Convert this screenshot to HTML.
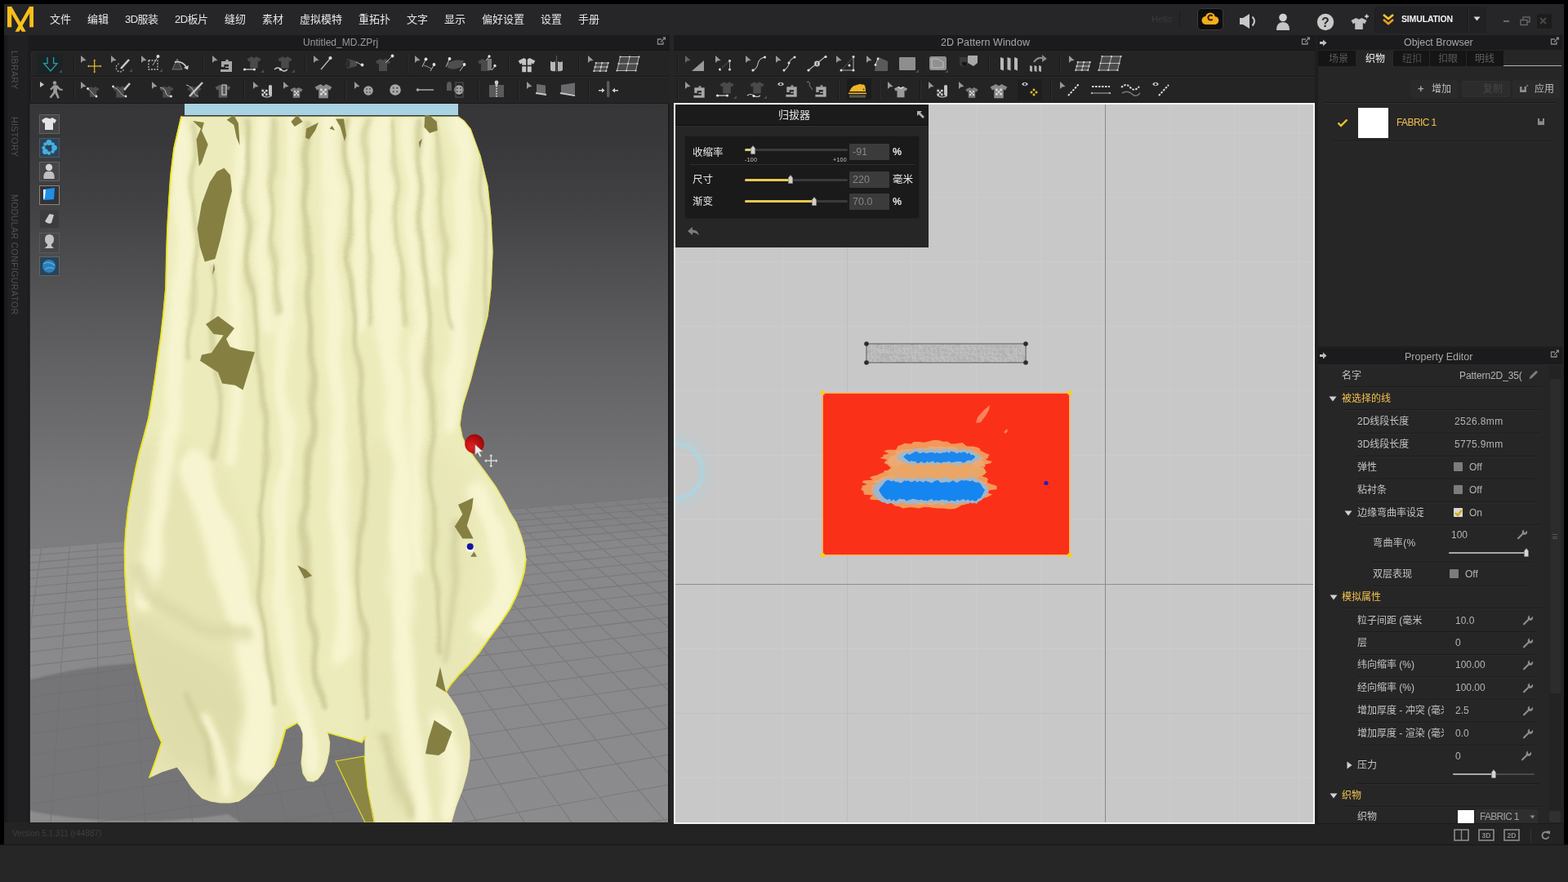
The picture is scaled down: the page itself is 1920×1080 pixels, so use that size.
<!DOCTYPE html>
<html lang="zh"><head><meta charset="utf-8"><title>Marvelous Designer</title><style>
html,body{margin:0;padding:0;}
body{width:1920px;height:1080px;overflow:hidden;background:#262626;position:relative;font-family:"Liberation Sans","Noto Sans CJK SC",sans-serif;}
.b{position:absolute;display:block;}
.t{position:absolute;white-space:nowrap;font-family:"Liberation Sans","Noto Sans CJK SC",sans-serif;will-change:transform;}
</style></head>
<body>
<div class="b" style="left:0px;top:0px;width:1920px;height:1035px;background:#000;"></div>
<div class="b" style="left:5px;top:5px;width:1910px;height:1030px;background:#252526;"></div>
<div class="b" style="left:5px;top:5px;width:1910px;height:38px;background:#262628;"></div>
<div class="b" style="left:5px;top:43px;width:1910px;height:19px;background:#252526;"></div>
<div class="b" style="left:37px;top:43px;width:783px;height:18px;background:#1b1b1d;"></div>
<div class="b" style="left:825px;top:43px;width:785px;height:18px;background:#1b1b1d;"></div>
<div class="b" style="left:1614px;top:43px;width:299px;height:18px;background:#1b1b1d;"></div>
<div class="b" style="left:37px;top:62px;width:783px;height:64px;background:#242425;"></div>
<div class="b" style="left:825px;top:62px;width:785px;height:64px;background:#242425;"></div>
<div class="b" style="left:37px;top:61px;width:783px;height:1px;background:#151516;"></div>
<div class="b" style="left:825px;top:61px;width:785px;height:1px;background:#151516;"></div>
<div class="b" style="left:37px;top:93px;width:783px;height:1px;background:#18181a;"></div>
<div class="b" style="left:825px;top:93px;width:785px;height:1px;background:#18181a;"></div>
<div class="b" style="left:37px;top:94px;width:783px;height:1px;background:#2c2c2e;"></div>
<div class="b" style="left:825px;top:94px;width:785px;height:1px;background:#2c2c2e;"></div>
<div class="b" style="left:5px;top:43px;width:31px;height:991px;background:#202022;"></div>
<div class="b" style="left:5px;top:43px;width:4px;height:991px;background:#1a1a1b;"></div>
<div class="b" style="left:34px;top:43px;width:3px;height:991px;background:#1c1c1d;"></div>
<div class="b" style="left:5px;top:1007px;width:1910px;height:27px;background:#232324;"></div>
<div class="b" style="left:0px;top:1034px;width:1920px;height:1px;background:#171717;"></div>
<div class="b" style="left:0px;top:1035px;width:1920px;height:45px;background:#262626;"></div>
<svg class="b" style="left:0px;top:0px;" width="50" height="44"><g fill="#f9be1c"><rect x="9" y="8" width="5.2" height="25.3"/><rect x="36.2" y="8" width="4.8" height="25.3"/><path d="M9 8h5.200L31.700 38.700h-4.900z"/><path d="M41 8h-5L18.500 38.700h4.800z"/></g></svg>
<div class="t " style="left:61px;top:16.2px;font-size:13px;line-height:15.6px;color:#e6e6e6;">文件</div>
<div class="t " style="left:107px;top:16.2px;font-size:13px;line-height:15.6px;color:#e6e6e6;">编辑</div>
<div class="t " style="left:153px;top:16.2px;font-size:13px;line-height:15.6px;color:#e6e6e6;letter-spacing:-0.5px;">3D服装</div>
<div class="t " style="left:214px;top:16.2px;font-size:13px;line-height:15.6px;color:#e6e6e6;letter-spacing:-0.5px;">2D板片</div>
<div class="t " style="left:275px;top:16.2px;font-size:13px;line-height:15.6px;color:#e6e6e6;">缝纫</div>
<div class="t " style="left:321px;top:16.2px;font-size:13px;line-height:15.6px;color:#e6e6e6;">素材</div>
<div class="t " style="left:367px;top:16.2px;font-size:13px;line-height:15.6px;color:#e6e6e6;">虚拟模特</div>
<div class="t " style="left:439px;top:16.2px;font-size:13px;line-height:15.6px;color:#e6e6e6;">重拓扑</div>
<div class="t " style="left:498px;top:16.2px;font-size:13px;line-height:15.6px;color:#e6e6e6;">文字</div>
<div class="t " style="left:544px;top:16.2px;font-size:13px;line-height:15.6px;color:#e6e6e6;">显示</div>
<div class="t " style="left:590px;top:16.2px;font-size:13px;line-height:15.6px;color:#e6e6e6;">偏好设置</div>
<div class="t " style="left:662px;top:16.2px;font-size:13px;line-height:15.6px;color:#e6e6e6;">设置</div>
<div class="t " style="left:708px;top:16.2px;font-size:13px;line-height:15.6px;color:#e6e6e6;">手册</div>
<div class="t " style="left:371px;top:44.8px;font-size:12px;line-height:14.4px;color:#9a9a9a;letter-spacing:0.05px;">Untitled_MD.ZPrj</div>
<div class="t " style="left:1152px;top:44.5px;font-size:12.5px;line-height:15px;color:#a8a8a8;letter-spacing:0.08px;">2D Pattern Window</div>
<div class="t " style="left:1719px;top:44.56px;font-size:12.4px;line-height:14.88px;color:#a8a8a8;">Object Browser</div>
<svg class="b" style="left:804px;top:44.5px;" width="12" height="10"><path d="M6 3H1.500V9H8V6" fill="none" stroke="#8a8a8a" stroke-width="1.3"/><path d="M5 6.5L10.5 1" stroke="#8a8a8a" stroke-width="1.3"/><path d="M7 0.5H11V4.5z" fill="#8a8a8a"/></svg>
<svg class="b" style="left:1593px;top:44.5px;" width="12" height="10"><path d="M6 3H1.500V9H8V6" fill="none" stroke="#8a8a8a" stroke-width="1.3"/><path d="M5 6.5L10.5 1" stroke="#8a8a8a" stroke-width="1.3"/><path d="M7 0.5H11V4.5z" fill="#8a8a8a"/></svg>
<svg class="b" style="left:1898px;top:44.5px;" width="12" height="10"><path d="M6 3H1.500V9H8V6" fill="none" stroke="#8a8a8a" stroke-width="1.3"/><path d="M5 6.5L10.5 1" stroke="#8a8a8a" stroke-width="1.3"/><path d="M7 0.5H11V4.5z" fill="#8a8a8a"/></svg>
<div class="t" style="left:24px;top:62px;font-size:10.5px;line-height:12px;color:#505052;transform-origin:0 0;transform:rotate(90deg);letter-spacing:0.4px;">LIBRARY</div>
<div class="t" style="left:24px;top:143px;font-size:10.5px;line-height:12px;color:#505052;transform-origin:0 0;transform:rotate(90deg);letter-spacing:0.4px;">HISTORY</div>
<div class="t" style="left:24px;top:238px;font-size:10.5px;line-height:12px;color:#505052;transform-origin:0 0;transform:rotate(90deg);letter-spacing:0.4px;">MODULAR CONFIGURATOR</div>
<div class="t " style="left:15px;top:1014.5px;font-size:10px;line-height:12px;color:#3e3e3e;">Version 5.1.311 (r44887)</div>
<svg class="b" style="left:0px;top:0px;" width="1920" height="130"><rect x="45" y="66" width="32" height="25" rx="1" fill="#1c2325" /><path d="M58 70v7.600h-4.300l8.200 9.400l8.100-9.400h-4.400v-7.600" fill="none" stroke="#2a9ea8" stroke-width="1.3" /><path d="M76 89v-4l-4 4z" fill="#4c4c4c"/><path d="M90.5 66V90" stroke="#1a1a1b" stroke-width="1"/><path d="M91.5 66V90" stroke="#2f2f31" stroke-width="1"/><path d="M99 68l0 9l2.6 -2.6l4 -0.4z" fill="#9a9a9a"/><path d="M109 81L122.5 81" stroke="#f0cc30" stroke-width="1.1" fill="none"/><path d="M115.7 74.5L115.7 87.5" stroke="#f0cc30" stroke-width="1.1" fill="none"/><path d="M109 79.500v3l-2-1.500zM122.500 79.500v3l2-1.500zM114.200 74.500h3l-1.500-2zM114.200 87.500h3l-1.500 2z" fill="#f0cc30" /><path d="M136 68l0 9l2.6 -2.6l4 -0.4z" fill="#9a9a9a"/><path d="M146 78a5 5 0 1 0 6 6" fill="none" stroke="#b0b0b0" stroke-width="1.2" stroke-dasharray="2 1.5"/><path d="M148 84L158 73" stroke="#c8c8c8" stroke-width="2.6" fill="none"/><path d="M162 88v-4l-4 4z" fill="#4c4c4c"/><path d="M173 68l0 9l2.6 -2.6l4 -0.4z" fill="#9a9a9a"/><rect x="182" y="74" width="11" height="11" fill="none" stroke="#b8b8b8" stroke-width="1.3" stroke-dasharray="2 1.5"/><path d="M187 80L193 70" stroke="#b0b0b0" stroke-width="1" fill="none"/><circle cx="193.5" cy="69" r="2" fill="#d8d8d8"/><path d="M199 88v-4l-4 4z" fill="#4c4c4c"/><path d="M217 72l-6 13h12z" fill="#3e3e40" stroke="#777" stroke-width="1" /><path d="M214 76q9-2 14 6" fill="none" stroke="#c8c8c8" stroke-width="1.8" /><path d="M231 80l-1 5.5l-5-2.5z" fill="#d0d0d0" /><path d="M248.5 66V90" stroke="#1a1a1b" stroke-width="1"/><path d="M249.5 66V90" stroke="#2f2f31" stroke-width="1"/><path d="M260 68l0 9l2.6 -2.6l4 -0.4z" fill="#9a9a9a"/><rect x="271" y="75" width="13" height="4" fill="#a8a8a8"/><rect x="271" y="79" width="3.5" height="3" fill="#a8a8a8"/><rect x="280" y="79" width="4" height="6.5" fill="#a8a8a8"/><rect x="270" y="85" width="14" height="3" fill="#a8a8a8"/><rect x="276.5" y="73" width="3" height="2" fill="#a8a8a8"/><rect x="276" y="81.5" width="4" height="1.5" fill="#a8a8a8"/><path d="M308.15 69.35L302.45 72.2L304.35 75.525L306.25 74.575L306.25 83.6L315.75 83.6L315.75 74.575L317.65 75.525L319.55 72.2L313.85 69.35L311 71.25z" fill="#4a4a4c"/><path d="M300 85L312 85" stroke="#ddd" stroke-width="1.2" fill="none"/><circle cx="299.5" cy="85" r="1.6" fill="#e0e0e0"/><circle cx="311.5" cy="85" r="1.6" fill="#e0e0e0"/><path d="M323 89v-4l-4 4z" fill="#4c4c4c"/><path d="M346.15 69.35L340.45 72.2L342.35 75.525L344.25 74.575L344.25 83.6L353.75 83.6L353.75 74.575L355.65 75.525L357.55 72.2L351.85 69.35L349 71.25z" fill="#4a4a4c"/><path d="M336 85q4-4 8 0t8 0" fill="none" stroke="#ccc" stroke-width="1.2" /><circle cx="343.5" cy="85" r="1.6" fill="#e0e0e0"/><path d="M361 89v-4l-4 4z" fill="#4c4c4c"/><path d="M373.5 66V90" stroke="#1a1a1b" stroke-width="1"/><path d="M374.5 66V90" stroke="#2f2f31" stroke-width="1"/><path d="M384 68l0 9l2.6 -2.6l4 -0.4z" fill="#9a9a9a"/><path d="M393 85L404 72" stroke="#c0c0c0" stroke-width="1.2" fill="none"/><circle cx="404.5" cy="71" r="2.1" fill="#d8d8d8"/><path d="M425 72q-3 6 0 12l12-3v-6z" fill="#4a4a4c" /><ellipse cx="426" cy="78" rx="2.6" ry="5" fill="#2c2c2e"/><path d="M436 76L443 79.5" stroke="#bbb" stroke-width="1" fill="none"/><circle cx="443.5" cy="79.5" r="1.9" fill="#d8d8d8"/><path d="M466 72L460 75L462 78.5L464 77.5L464 87L474 87L474 77.5L476 78.5L478 75L472 72L469 74z" fill="#4a4a4c"/><path d="M472 77L480 69" stroke="#bbb" stroke-width="1" fill="none"/><circle cx="480.5" cy="68.5" r="1.9" fill="#e0e0e0"/><path d="M498.5 66V90" stroke="#1a1a1b" stroke-width="1"/><path d="M499.5 66V90" stroke="#2f2f31" stroke-width="1"/><path d="M508 68l0 9l2.6 -2.6l4 -0.4z" fill="#9a9a9a"/><path d="M519 80q6 2 9 4" fill="none" stroke="#999" stroke-width="1" /><path d="M517 82L521 73" stroke="#bbb" stroke-width="1" fill="none"/><path d="M527 87L531 80" stroke="#bbb" stroke-width="1" fill="none"/><circle cx="521.5" cy="72.5" r="1.9" fill="#e0e0e0"/><circle cx="531.5" cy="79" r="1.9" fill="#e0e0e0"/><path d="M548 78q6-6 20-4l-3 8q-10 5-17 1z" fill="#4e4e50" /><path d="M546 82L550 73" stroke="#bbb" stroke-width="1" fill="none"/><circle cx="550.5" cy="72" r="1.9" fill="#e0e0e0"/><path d="M563 87L568 80" stroke="#bbb" stroke-width="1" fill="none"/><circle cx="568.5" cy="79" r="1.9" fill="#e0e0e0"/><path d="M591 72L585 75L587 78.5L589 77.5L589 87L599 87L599 77.5L601 78.5L603 75L597 72L594 74z" fill="#4a4a4c"/><path d="M597 72h5v14h-5z" fill="#777" /><path d="M595 74L599 69.5" stroke="#ccc" stroke-width="1" fill="none"/><circle cx="599" cy="69" r="1.7" fill="#e0e0e0"/><path d="M602 86L606 81" stroke="#ccc" stroke-width="1" fill="none"/><circle cx="606" cy="80.5" r="1.7" fill="#e0e0e0"/><path d="M622.5 66V90" stroke="#1a1a1b" stroke-width="1"/><path d="M623.5 66V90" stroke="#2f2f31" stroke-width="1"/><path d="M641.55 70.95L634.65 74.4L636.95 78.425L639.25 77.275L639.25 88.2L650.75 88.2L650.75 77.275L653.05 78.425L655.35 74.4L648.45 70.95L645 73.25z" fill="#c4c4c4"/><path d="M645 69L645 89" stroke="#242425" stroke-width="1.6" fill="none"/><path d="M637 80.5L653 80.5" stroke="#242425" stroke-width="1.6" fill="none"/><path d="M674 75q4 2 6 0v12q-3 1-6-1z" fill="#b8b8b8" /><path d="M683 75q3 2 6 0v11q-3 2-6 1z" fill="#b0b0b0" /><path d="M681.5 68L681.5 88" stroke="#555" stroke-width="1.2" fill="none"/><path d="M708.5 66V90" stroke="#1a1a1b" stroke-width="1"/><path d="M709.5 66V90" stroke="#2f2f31" stroke-width="1"/><path d="M720 68l0 9l2.6 -2.6l4 -0.4z" fill="#9a9a9a"/><path d="M729.75 77L744.75 77L742.25 87L727.25 87z" fill="#4a4a4c"/><path d="M729.75 77L727.25 87" stroke="#b4b4b4" stroke-width="1" fill="none"/><path d="M729.75 77L744.75 77" stroke="#b4b4b4" stroke-width="1" fill="none"/><path d="M737.25 77L734.75 87" stroke="#b4b4b4" stroke-width="1" fill="none"/><path d="M728.5 82L743.5 82" stroke="#b4b4b4" stroke-width="1" fill="none"/><path d="M744.75 77L742.25 87" stroke="#b4b4b4" stroke-width="1" fill="none"/><path d="M727.25 87L742.25 87" stroke="#b4b4b4" stroke-width="1" fill="none"/><circle cx="729.75" cy="77" r="1.1" fill="#d8d8d8"/><circle cx="728.5" cy="82" r="1.1" fill="#d8d8d8"/><circle cx="727.25" cy="87" r="1.1" fill="#d8d8d8"/><circle cx="737.25" cy="77" r="1.1" fill="#d8d8d8"/><circle cx="736" cy="82" r="1.1" fill="#d8d8d8"/><circle cx="734.75" cy="87" r="1.1" fill="#d8d8d8"/><circle cx="744.75" cy="77" r="1.1" fill="#d8d8d8"/><circle cx="743.5" cy="82" r="1.1" fill="#d8d8d8"/><circle cx="742.25" cy="87" r="1.1" fill="#d8d8d8"/><path d="M759.5 69.5L782.5 69.5L778.5 86.5L755.5 86.5z" fill="#4a4a4c"/><path d="M759.5 69.5L755.5 86.5" stroke="#b4b4b4" stroke-width="1" fill="none"/><path d="M759.5 69.5L782.5 69.5" stroke="#b4b4b4" stroke-width="1" fill="none"/><path d="M771 69.5L767 86.5" stroke="#b4b4b4" stroke-width="1" fill="none"/><path d="M757.5 78L780.5 78" stroke="#b4b4b4" stroke-width="1" fill="none"/><path d="M782.5 69.5L778.5 86.5" stroke="#b4b4b4" stroke-width="1" fill="none"/><path d="M755.5 86.5L778.5 86.5" stroke="#b4b4b4" stroke-width="1" fill="none"/><circle cx="759.5" cy="69.5" r="1.1" fill="#d8d8d8"/><circle cx="757.5" cy="78" r="1.1" fill="#d8d8d8"/><circle cx="755.5" cy="86.5" r="1.1" fill="#d8d8d8"/><circle cx="771" cy="69.5" r="1.1" fill="#d8d8d8"/><circle cx="769" cy="78" r="1.1" fill="#d8d8d8"/><circle cx="767" cy="86.5" r="1.1" fill="#d8d8d8"/><circle cx="782.5" cy="69.5" r="1.1" fill="#d8d8d8"/><circle cx="780.5" cy="78" r="1.1" fill="#d8d8d8"/><circle cx="778.5" cy="86.5" r="1.1" fill="#d8d8d8"/><path d="M49 100l5 3.5l-5 3.5z" fill="#c8c8c8" /><circle cx="67" cy="101.5" r="2.3" fill="#9a9a9a"/><path d="M66 104l-5 5l1.5 1.5l3-2.5l-0.5 5l-4.5 6l2 1.2l5-6l3 6.5l2.2-1l-3-8l0.5-3.5l3 2.5h3.5v-2h-2.5l-4-4.5z" fill="#9a9a9a" /><path d="M90.5 98V122" stroke="#1a1a1b" stroke-width="1"/><path d="M91.5 98V122" stroke="#2f2f31" stroke-width="1"/><path d="M99 100l0 9l2.6 -2.6l4 -0.4z" fill="#9a9a9a"/><path d="M111.45 106.05L106.35 108.6L108.05 111.575L109.75 110.725L109.75 118.8L118.25 118.8L118.25 110.725L119.95 111.575L121.65 108.6L116.55 106.05L114 107.75z" fill="#4a4a4c"/><path d="M107 108q4 3 6 6t5 4" fill="none" stroke="#aaa" stroke-width="1" /><circle cx="107.5" cy="108.5" r="1.4" fill="#e0e0e0"/><circle cx="118" cy="118" r="1.4" fill="#e0e0e0"/><path d="M144.15 105.35L138.45 108.2L140.35 111.525L142.25 110.575L142.25 119.6L151.75 119.6L151.75 110.575L153.65 111.525L155.55 108.2L149.85 105.35L147 107.25z" fill="#4a4a4c"/><path d="M138 106q6 2 9 7t7 5" fill="none" stroke="#aaa" stroke-width="1" /><circle cx="138.5" cy="106" r="1.4" fill="#e0e0e0"/><circle cx="154" cy="118" r="1.4" fill="#e0e0e0"/><path d="M152 110L159 102" stroke="#c8c8c8" stroke-width="2.6" fill="none"/><path d="M186 100l0 9l2.6 -2.6l4 -0.4z" fill="#9a9a9a"/><path d="M201.15 105.35L195.45 108.2L197.35 111.525L199.25 110.575L199.25 119.6L208.75 119.6L208.75 110.575L210.65 111.525L212.55 108.2L206.85 105.35L204 107.25z" fill="#4a4a4c"/><path d="M196 107q6 1 7 6t6 5" fill="none" stroke="#bbb" stroke-width="1" /><circle cx="209.5" cy="118" r="1.4" fill="#e0e0e0"/><path d="M235.15 105.35L229.45 108.2L231.35 111.525L233.25 110.575L233.25 119.6L242.75 119.6L242.75 110.575L244.65 111.525L246.55 108.2L240.85 105.35L238 107.25z" fill="#4a4a4c"/><path d="M228 104q7 2 9 8t6 6" fill="none" stroke="#bbb" stroke-width="1" /><path d="M232 118L248 101" stroke="#c8c8c8" stroke-width="2.4" fill="none"/><path d="M269.85 103.65L263.55 106.8L265.65 110.475L267.75 109.425L267.75 119.4L278.25 119.4L278.25 109.425L280.35 110.475L282.45 106.8L276.15 103.65L273 105.75z" fill="#5a5a5c"/><rect x="272" y="104" width="5" height="12" fill="none" stroke="#c8c8c8" stroke-width="1.2"/><path d="M298.5 98V122" stroke="#1a1a1b" stroke-width="1"/><path d="M299.5 98V122" stroke="#2f2f31" stroke-width="1"/><path d="M310 100l0 9l2.6 -2.6l4 -0.4z" fill="#9a9a9a"/><path d="M320 108l8 2v9l-8-2z" fill="#3a3a3c" /><rect x="320.49" y="109.84" width="2.34" height="2.34" fill="#dcdcdc"/><rect x="320.49" y="114.52" width="2.34" height="2.34" fill="#dcdcdc"/><rect x="322.83" y="112.18" width="2.34" height="2.34" fill="#dcdcdc"/><rect x="325.17" y="109.84" width="2.34" height="2.34" fill="#dcdcdc"/><rect x="325.17" y="114.52" width="2.34" height="2.34" fill="#dcdcdc"/><path d="M329 105q2-2 4 0v11q-2 3-4 0z" fill="#c4c4c4" /><path d="M321 117q6 4 12 0" fill="none" stroke="#ccc" stroke-width="1.2" /><path d="M347 100l0 9l2.6 -2.6l4 -0.4z" fill="#9a9a9a"/><path d="M360.45 107.05L355.35 109.6L357.05 112.575L358.75 111.725L358.75 119.8L367.25 119.8L367.25 111.725L368.95 112.575L370.65 109.6L365.55 107.05L363 108.75z" fill="#7a7a7a"/><rect x="360.075" y="111.2" width="1.95" height="1.95" fill="#dcdcdc"/><rect x="360.075" y="115.1" width="1.95" height="1.95" fill="#dcdcdc"/><rect x="362.025" y="113.15" width="1.95" height="1.95" fill="#dcdcdc"/><rect x="363.975" y="111.2" width="1.95" height="1.95" fill="#dcdcdc"/><rect x="363.975" y="115.1" width="1.95" height="1.95" fill="#dcdcdc"/><path d="M392.55 102.95L385.65 106.4L387.95 110.425L390.25 109.275L390.25 120.2L401.75 120.2L401.75 109.275L404.05 110.425L406.35 106.4L399.45 102.95L396 105.25z" fill="#8a8a8a"/><rect x="392.1" y="108.6" width="2.6" height="2.6" fill="#dcdcdc"/><rect x="392.1" y="113.8" width="2.6" height="2.6" fill="#dcdcdc"/><rect x="394.7" y="111.2" width="2.6" height="2.6" fill="#dcdcdc"/><rect x="397.3" y="108.6" width="2.6" height="2.6" fill="#dcdcdc"/><rect x="397.3" y="113.8" width="2.6" height="2.6" fill="#dcdcdc"/><path d="M422.5 98V122" stroke="#1a1a1b" stroke-width="1"/><path d="M423.5 98V122" stroke="#2f2f31" stroke-width="1"/><path d="M434 100l0 9l2.6 -2.6l4 -0.4z" fill="#9a9a9a"/><circle cx="451" cy="111" r="5.8" fill="#a4a4a4"/><circle cx="449.086" cy="109.086" r="0.986" fill="#555"/><circle cx="452.914" cy="109.086" r="0.986" fill="#555"/><circle cx="449.086" cy="112.914" r="0.986" fill="#555"/><circle cx="452.914" cy="112.914" r="0.986" fill="#555"/><circle cx="484" cy="110" r="6.8" fill="#a8a8a8"/><circle cx="481.756" cy="107.756" r="1.156" fill="#555"/><circle cx="486.244" cy="107.756" r="1.156" fill="#555"/><circle cx="481.756" cy="112.244" r="1.156" fill="#555"/><circle cx="486.244" cy="112.244" r="1.156" fill="#555"/><path d="M511 110L531 110" stroke="#a0a0a0" stroke-width="1.6" fill="none"/><circle cx="511.5" cy="110" r="1.8" fill="#a8a8a8"/><path d="M547 105q0-5 3-5t3 5v6h-6z" fill="#5a5a5c" /><circle cx="562" cy="110" r="5.8" fill="#a4a4a4"/><circle cx="560.086" cy="108.086" r="0.986" fill="#555"/><circle cx="563.914" cy="108.086" r="0.986" fill="#555"/><circle cx="560.086" cy="111.914" r="0.986" fill="#555"/><circle cx="563.914" cy="111.914" r="0.986" fill="#555"/><rect x="558" y="101" width="9" height="18" fill="none" stroke="#555" stroke-width="1"/><path d="M585.5 98V122" stroke="#1a1a1b" stroke-width="1"/><path d="M586.5 98V122" stroke="#2f2f31" stroke-width="1"/><rect x="599" y="104" width="18" height="15" rx="0" fill="#5a5a5c" /><path d="M606.5 100h3v5h-3z" fill="#c0c0c0" /><circle cx="608" cy="101" r="2.4" fill="#c8c8c8"/><path d="M608 105L608 119" stroke="#ddd" stroke-width="1.6" fill="none" stroke-dasharray="1.5 1.5"/><path d="M634.5 98V122" stroke="#1a1a1b" stroke-width="1"/><path d="M635.5 98V122" stroke="#2f2f31" stroke-width="1"/><path d="M645 100l0 9l2.6 -2.6l4 -0.4z" fill="#9a9a9a"/><path d="M657 103l11 1.5v11l-11-1z" fill="#6a6a6c" /><path d="M656 114L669 116" stroke="#c8c8c8" stroke-width="1.8" fill="none"/><path d="M687 104l17-2.5v14l-17-2z" fill="#6a6a6c" /><path d="M686 114L704 117" stroke="#c8c8c8" stroke-width="1.8" fill="none"/><path d="M720.5 98V122" stroke="#1a1a1b" stroke-width="1"/><path d="M721.5 98V122" stroke="#2f2f31" stroke-width="1"/><rect x="743" y="99" width="3.4" height="20" rx="1.5" fill="#5a5a5c" /><path d="M733 110h4v-2.2l3.6 2.9l-3.6 2.9v-2.2h-4z" fill="#d0d0d0" /><path d="M757 110h-4v-2.2l-3.6 2.9l3.6 2.9v-2.2h4z" fill="#d0d0d0" /><path d="M829.5 66V90" stroke="#1a1a1b" stroke-width="1"/><path d="M830.5 66V90" stroke="#2f2f31" stroke-width="1"/><path d="M829.5 98V122" stroke="#1a1a1b" stroke-width="1"/><path d="M830.5 98V122" stroke="#2f2f31" stroke-width="1"/><path d="M37.5 66V90" stroke="#1a1a1b" stroke-width="1"/><path d="M38.5 66V90" stroke="#2f2f31" stroke-width="1"/><path d="M37.5 98V122" stroke="#1a1a1b" stroke-width="1"/><path d="M38.5 98V122" stroke="#2f2f31" stroke-width="1"/><path d="M839 68l0 9l2.6 -2.6l4 -0.4z" fill="#666"/><path d="M847 87h15v-13z" fill="#9a9a9a" /><path d="M876 68l0 9l2.6 -2.6l4 -0.4z" fill="#9a9a9a"/><circle cx="881.5" cy="85" r="1.5" fill="#e0e0e0"/><circle cx="893.5" cy="85" r="1.5" fill="#e0e0e0"/><circle cx="893.5" cy="74.5" r="1.5" fill="#e0e0e0"/><path d="M882 85L893 75" stroke="#888" stroke-width="1" fill="none" stroke-dasharray="1.5 1.5"/><path d="M893.5 75L893.5 85" stroke="#aaa" stroke-width="1" fill="none"/><path d="M913 68l0 9l2.6 -2.6l4 -0.4z" fill="#9a9a9a"/><path d="M922 86q5-2 6-8t8-8" fill="none" stroke="#b0b0b0" stroke-width="1.2" /><circle cx="922" cy="86" r="1.6" fill="#e0e0e0"/><circle cx="936.5" cy="70" r="1.6" fill="#e0e0e0"/><path d="M950 68l0 9l2.6 -2.6l4 -0.4z" fill="#9a9a9a"/><path d="M960 86q5-3 6-8t7-8" fill="none" stroke="#b0b0b0" stroke-width="1.2" /><circle cx="960" cy="86" r="1.5" fill="#e0e0e0"/><circle cx="966" cy="77" r="1.5" fill="#e0e0e0"/><circle cx="973" cy="70" r="1.5" fill="#e0e0e0"/><path d="M990 86L1011 69" stroke="#b0b0b0" stroke-width="1.2" fill="none"/><circle cx="990" cy="86" r="1.6" fill="#e0e0e0"/><circle cx="1011" cy="69.5" r="1.6" fill="#e0e0e0"/><circle cx="1000.5" cy="78" r="3.4" fill="#c4c4c4"/><path d="M1000.5 76L1000.5 80" stroke="#333" stroke-width="1" fill="none"/><path d="M1024 68l0 9l2.6 -2.6l4 -0.4z" fill="#9a9a9a"/><path d="M1030 86h15v-16" fill="none" stroke="#aaa" stroke-width="1" /><path d="M1030 86L1045 70" stroke="#888" stroke-width="1" fill="none" stroke-dasharray="1.5 1.5"/><circle cx="1030" cy="86" r="1.5" fill="#e0e0e0"/><circle cx="1045" cy="86" r="1.5" fill="#e0e0e0"/><circle cx="1045" cy="69.5" r="1.5" fill="#e0e0e0"/><circle cx="1040" cy="80" r="1.5" fill="#e0e0e0"/><path d="M1061 68l0 9l2.6 -2.6l4 -0.4z" fill="#9a9a9a"/><path d="M1072 80l4-10l11 5v12h-16z" fill="#5a5a5c" /><path d="M1072 79L1075 72" stroke="#ccc" stroke-width="1" fill="none"/><circle cx="1075" cy="72" r="1.4" fill="#e0e0e0"/><circle cx="1072" cy="79.5" r="1.4" fill="#e0e0e0"/><rect x="1101" y="70" width="20" height="16" rx="1" fill="#8e8e8e" /><path d="M1125 89v-4l-4 4z" fill="#4c4c4c"/><rect x="1138" y="69" width="21" height="17" rx="2.5" fill="#909090" /><path d="M1141 72h7l7 4v7h-14z" fill="none" stroke="#c0c0c0" stroke-width="1" /><path d="M1161 89v-4l-4 4z" fill="#4c4c4c"/><path d="M1175 70h10v9q-5 6-10 0z" fill="#3a3a3c" /><path d="M1178 76h6l0 3q-3 4-6 0z" fill="#161616" /><path d="M1185 68h12v9l-5 4l-7-4z" fill="#a8a8a8" /><path d="M1210.5 66V90" stroke="#1a1a1b" stroke-width="1"/><path d="M1211.5 66V90" stroke="#2f2f31" stroke-width="1"/><path d="M1225 70l4 1.5v15l-4-1.5z" fill="#b8b8b8" /><path d="M1233.5 70l4 1.5v15l-4-1.5z" fill="#b8b8b8" /><path d="M1242 70l4 1.5v15l-4-1.5z" fill="#b8b8b8" /><path d="M1261 80l3 1v7l-3-1z" fill="#b0b0b0" /><path d="M1266.5 80l3 1v7l-3-1z" fill="#b0b0b0" /><path d="M1272 80l3 1v7l-3-1z" fill="#b0b0b0" /><path d="M1266 76q4-6 10-5" fill="none" stroke="#8a8a8a" stroke-width="2.2" /><path d="M1276 67l6 5l-6 4z" fill="#8a8a8a" /><path d="M1297.5 66V90" stroke="#1a1a1b" stroke-width="1"/><path d="M1298.5 66V90" stroke="#2f2f31" stroke-width="1"/><path d="M1309 68l0 9l2.6 -2.6l4 -0.4z" fill="#9a9a9a"/><path d="M1319.75 76L1334.75 76L1332.25 86L1317.25 86z" fill="#4a4a4c"/><path d="M1319.75 76L1317.25 86" stroke="#b4b4b4" stroke-width="1" fill="none"/><path d="M1319.75 76L1334.75 76" stroke="#b4b4b4" stroke-width="1" fill="none"/><path d="M1327.25 76L1324.75 86" stroke="#b4b4b4" stroke-width="1" fill="none"/><path d="M1318.5 81L1333.5 81" stroke="#b4b4b4" stroke-width="1" fill="none"/><path d="M1334.75 76L1332.25 86" stroke="#b4b4b4" stroke-width="1" fill="none"/><path d="M1317.25 86L1332.25 86" stroke="#b4b4b4" stroke-width="1" fill="none"/><circle cx="1319.75" cy="76" r="1.1" fill="#d8d8d8"/><circle cx="1318.5" cy="81" r="1.1" fill="#d8d8d8"/><circle cx="1317.25" cy="86" r="1.1" fill="#d8d8d8"/><circle cx="1327.25" cy="76" r="1.1" fill="#d8d8d8"/><circle cx="1326" cy="81" r="1.1" fill="#d8d8d8"/><circle cx="1324.75" cy="86" r="1.1" fill="#d8d8d8"/><circle cx="1334.75" cy="76" r="1.1" fill="#d8d8d8"/><circle cx="1333.5" cy="81" r="1.1" fill="#d8d8d8"/><circle cx="1332.25" cy="86" r="1.1" fill="#d8d8d8"/><path d="M1349.5 69L1372.5 69L1368.5 86L1345.5 86z" fill="#4a4a4c"/><path d="M1349.5 69L1345.5 86" stroke="#b4b4b4" stroke-width="1" fill="none"/><path d="M1349.5 69L1372.5 69" stroke="#b4b4b4" stroke-width="1" fill="none"/><path d="M1361 69L1357 86" stroke="#b4b4b4" stroke-width="1" fill="none"/><path d="M1347.5 77.5L1370.5 77.5" stroke="#b4b4b4" stroke-width="1" fill="none"/><path d="M1372.5 69L1368.5 86" stroke="#b4b4b4" stroke-width="1" fill="none"/><path d="M1345.5 86L1368.5 86" stroke="#b4b4b4" stroke-width="1" fill="none"/><circle cx="1349.5" cy="69" r="1.1" fill="#d8d8d8"/><circle cx="1347.5" cy="77.5" r="1.1" fill="#d8d8d8"/><circle cx="1345.5" cy="86" r="1.1" fill="#d8d8d8"/><circle cx="1361" cy="69" r="1.1" fill="#d8d8d8"/><circle cx="1359" cy="77.5" r="1.1" fill="#d8d8d8"/><circle cx="1357" cy="86" r="1.1" fill="#d8d8d8"/><circle cx="1372.5" cy="69" r="1.1" fill="#d8d8d8"/><circle cx="1370.5" cy="77.5" r="1.1" fill="#d8d8d8"/><circle cx="1368.5" cy="86" r="1.1" fill="#d8d8d8"/><path d="M839 100l0 9l2.6 -2.6l4 -0.4z" fill="#9a9a9a"/><rect x="850.3" y="107.3" width="12.35" height="3.8" fill="#a8a8a8"/><rect x="850.3" y="111.1" width="3.325" height="2.85" fill="#a8a8a8"/><rect x="858.85" y="111.1" width="3.8" height="6.175" fill="#a8a8a8"/><rect x="849.35" y="116.8" width="13.3" height="2.85" fill="#a8a8a8"/><rect x="855.525" y="105.4" width="2.85" height="1.9" fill="#a8a8a8"/><rect x="855.05" y="113.475" width="3.8" height="1.425" fill="#a8a8a8"/><path d="M887.15 100.35L881.45 103.2L883.35 106.525L885.25 105.575L885.25 114.6L894.75 114.6L894.75 105.575L896.65 106.525L898.55 103.2L892.85 100.35L890 102.25z" fill="#4a4a4c"/><path d="M879 117L891 117" stroke="#ddd" stroke-width="1.2" fill="none"/><circle cx="878.5" cy="117" r="1.6" fill="#e0e0e0"/><circle cx="890.5" cy="117" r="1.6" fill="#e0e0e0"/><path d="M902 121v-4l-4 4z" fill="#4c4c4c"/><path d="M924.15 100.35L918.45 103.2L920.35 106.525L922.25 105.575L922.25 114.6L931.75 114.6L931.75 105.575L933.65 106.525L935.55 103.2L929.85 100.35L927 102.25z" fill="#4a4a4c"/><path d="M915 117q4-3 8 0t8 0" fill="none" stroke="#ccc" stroke-width="1.2" /><circle cx="923" cy="117.5" r="1.6" fill="#e0e0e0"/><path d="M939 121v-4l-4 4z" fill="#4c4c4c"/><path d="M952 103q4-4.5 8 0q-4 4.5-8 0z" fill="#d0d0d0"/><circle cx="956" cy="103" r="1.5" fill="#222"/><rect x="963.3" y="106.3" width="12.35" height="3.8" fill="#a8a8a8"/><rect x="963.3" y="110.1" width="3.325" height="2.85" fill="#a8a8a8"/><rect x="971.85" y="110.1" width="3.8" height="6.175" fill="#a8a8a8"/><rect x="962.35" y="115.8" width="13.3" height="2.85" fill="#a8a8a8"/><rect x="968.525" y="104.4" width="2.85" height="1.9" fill="#a8a8a8"/><rect x="968.05" y="112.475" width="3.8" height="1.425" fill="#a8a8a8"/><path d="M988 101a2 2 0 1 1 3 3l4 6" fill="none" stroke="#666" stroke-width="1.2" /><rect x="999.3" y="106.3" width="12.35" height="3.8" fill="#a8a8a8"/><rect x="999.3" y="110.1" width="3.325" height="2.85" fill="#a8a8a8"/><rect x="1007.85" y="110.1" width="3.8" height="6.175" fill="#a8a8a8"/><rect x="998.35" y="115.8" width="13.3" height="2.85" fill="#a8a8a8"/><rect x="1004.52" y="104.4" width="2.85" height="1.9" fill="#a8a8a8"/><rect x="1004.05" y="112.475" width="3.8" height="1.425" fill="#a8a8a8"/><path d="M1026.5 98V122" stroke="#1a1a1b" stroke-width="1"/><path d="M1027.5 98V122" stroke="#2f2f31" stroke-width="1"/><rect x="1037" y="96" width="30" height="26" rx="0" fill="#1c1c1e" /><path d="M1040 112q3-8 12-9h5q3 1 3 9z" fill="#f0b428" /><path d="M1047 104q6-3 10-0.5" fill="none" stroke="#242425" stroke-width="1.4" /><rect x="1039" y="113.5" width="22" height="1.6" rx="0" fill="#f0b428" /><circle cx="1057.5" cy="109.5" r="0.9" fill="#5a3a00"/><rect x="1040" y="116.5" width="20" height="3" rx="0" fill="#5a5a4c" /><path d="M1076.5 98V122" stroke="#1a1a1b" stroke-width="1"/><path d="M1077.5 98V122" stroke="#2f2f31" stroke-width="1"/><path d="M1087 100l0 9l2.6 -2.6l4 -0.4z" fill="#9a9a9a"/><path d="M1100.3 105.7L1094.9 108.4L1096.7 111.55L1098.5 110.65L1098.5 119.2L1107.5 119.2L1107.5 110.65L1109.3 111.55L1111.1 108.4L1105.7 105.7L1103 107.5z" fill="#9a9a9a"/><path d="M1100 106.5q3 3 6 0" fill="none" stroke="#e0e0e0" stroke-width="1.4" /><path d="M1126.5 98V122" stroke="#1a1a1b" stroke-width="1"/><path d="M1127.5 98V122" stroke="#2f2f31" stroke-width="1"/><path d="M1137 100l0 9l2.6 -2.6l4 -0.4z" fill="#9a9a9a"/><path d="M1147 108l8 2v9l-8-2z" fill="#3a3a3c" /><rect x="1147.49" y="109.84" width="2.34" height="2.34" fill="#dcdcdc"/><rect x="1147.49" y="114.52" width="2.34" height="2.34" fill="#dcdcdc"/><rect x="1149.83" y="112.18" width="2.34" height="2.34" fill="#dcdcdc"/><rect x="1152.17" y="109.84" width="2.34" height="2.34" fill="#dcdcdc"/><rect x="1152.17" y="114.52" width="2.34" height="2.34" fill="#dcdcdc"/><path d="M1156 105q2-2 4 0v11q-2 3-4 0z" fill="#c4c4c4" /><path d="M1148 117q6 4 12 0" fill="none" stroke="#ccc" stroke-width="1.2" /><path d="M1174 100l0 9l2.6 -2.6l4 -0.4z" fill="#9a9a9a"/><path d="M1187.45 107.05L1182.35 109.6L1184.05 112.575L1185.75 111.725L1185.75 119.8L1194.25 119.8L1194.25 111.725L1195.95 112.575L1197.65 109.6L1192.55 107.05L1190 108.75z" fill="#7a7a7a"/><rect x="1187.08" y="111.2" width="1.95" height="1.95" fill="#dcdcdc"/><rect x="1187.08" y="115.1" width="1.95" height="1.95" fill="#dcdcdc"/><rect x="1189.03" y="113.15" width="1.95" height="1.95" fill="#dcdcdc"/><rect x="1190.98" y="111.2" width="1.95" height="1.95" fill="#dcdcdc"/><rect x="1190.98" y="115.1" width="1.95" height="1.95" fill="#dcdcdc"/><path d="M1219.55 102.95L1212.65 106.4L1214.95 110.425L1217.25 109.275L1217.25 120.2L1228.75 120.2L1228.75 109.275L1231.05 110.425L1233.35 106.4L1226.45 102.95L1223 105.25z" fill="#8a8a8a"/><rect x="1219.1" y="108.6" width="2.6" height="2.6" fill="#dcdcdc"/><rect x="1219.1" y="113.8" width="2.6" height="2.6" fill="#dcdcdc"/><rect x="1221.7" y="111.2" width="2.6" height="2.6" fill="#dcdcdc"/><rect x="1224.3" y="108.6" width="2.6" height="2.6" fill="#dcdcdc"/><rect x="1224.3" y="113.8" width="2.6" height="2.6" fill="#dcdcdc"/><rect x="1246" y="97" width="30" height="26" rx="0" fill="#1e1e20" /><path d="M1251 103q4-4.5 8 0q-4 4.5-8 0z" fill="#d0d0d0"/><circle cx="1255" cy="103" r="1.5" fill="#222"/><rect x="1264.7" y="108.7" width="2.6" height="2.6" rx="0" fill="#e8c020" /><rect x="1261.7" y="111.7" width="2.6" height="2.6" rx="0" fill="#e8c020" /><rect x="1267.7" y="111.7" width="2.6" height="2.6" rx="0" fill="#e8c020" /><rect x="1264.7" y="114.7" width="2.6" height="2.6" rx="0" fill="#e8c020" /><path d="M1286.5 98V122" stroke="#1a1a1b" stroke-width="1"/><path d="M1287.5 98V122" stroke="#2f2f31" stroke-width="1"/><path d="M1298 100l0 9l2.6 -2.6l4 -0.4z" fill="#9a9a9a"/><path d="M1308 117L1321 103" stroke="#e0e0e0" stroke-width="2" fill="none" stroke-dasharray="2.5 1.5"/><path d="M1337 106L1359 106" stroke="#d8d8d8" stroke-width="2" fill="none" stroke-dasharray="2.5 1.5"/><path d="M1337 114L1359 114" stroke="#999" stroke-width="1.2" fill="none"/><circle cx="1337" cy="114" r="1.2" fill="#aaa"/><circle cx="1359" cy="114" r="1.2" fill="#aaa"/><path d="M1373 107q6-6 11 0t11-1" fill="none" stroke="#d8d8d8" stroke-width="2" stroke-dasharray="2.5 1.5"/><path d="M1374 114q7-4 12 1t10-1" fill="none" stroke="#777" stroke-width="1.6" /><path d="M1411 103q4-4.5 8 0q-4 4.5-8 0z" fill="#d0d0d0"/><circle cx="1415" cy="103" r="1.5" fill="#222"/><path d="M1419 117L1431 104" stroke="#e0e0e0" stroke-width="2" fill="none" stroke-dasharray="2.5 1.5"/></svg>
<svg class="b" style="left:37px;top:127px;overflow:hidden;" width="781" height="880"><defs>
<linearGradient id="bg3" x1="0" y1="0" x2="0" y2="1">
<stop offset="0" stop-color="#363638"/><stop offset="0.05" stop-color="#38383a"/><stop offset="0.151" stop-color="#434345"/><stop offset="0.252" stop-color="#525254"/><stop offset="0.353" stop-color="#616163"/><stop offset="0.4545" stop-color="#6d6d6f"/><stop offset="0.53" stop-color="#777779"/><stop offset="0.62" stop-color="#7d7d7f"/><stop offset="1" stop-color="#7d7d7f"/>
</linearGradient>
<filter id="bl1" filterUnits="userSpaceOnUse" x="0" y="0" width="782" height="880"><feGaussianBlur stdDeviation="1.2"/></filter>
<filter id="bl2" filterUnits="userSpaceOnUse" x="0" y="0" width="782" height="880"><feGaussianBlur stdDeviation="2"/></filter>
<filter id="bl3" filterUnits="userSpaceOnUse" x="0" y="0" width="782" height="880"><feGaussianBlur stdDeviation="3"/></filter>
<filter id="bl5" filterUnits="userSpaceOnUse" x="0" y="0" width="782" height="880"><feGaussianBlur stdDeviation="5"/></filter>
<filter id="bl8" filterUnits="userSpaceOnUse" x="0" y="0" width="782" height="880"><feGaussianBlur stdDeviation="9"/></filter>
<filter id="wob" filterUnits="userSpaceOnUse" x="0" y="0" width="782" height="880"><feTurbulence type="fractalNoise" baseFrequency="0.018 0.012" numOctaves="2" seed="7" result="n"/><feDisplacementMap in="SourceGraphic" in2="n" scale="22" xChannelSelector="R" yChannelSelector="G"/></filter>
</defs><rect width="781" height="880" fill="url(#bg3)"/><linearGradient id="flg" x1="0" y1="480" x2="0" y2="880" gradientUnits="userSpaceOnUse"><stop offset="0" stop-color="#7f7f81"/><stop offset="0.16" stop-color="#88888a"/><stop offset="1" stop-color="#8c8c8e"/></linearGradient><clipPath id="cfloor"><polygon points="0,545 781,480 781,880 0,880"/></clipPath><g clip-path="url(#cfloor)"><polygon points="0,545 781,480 781,880 0,880" fill="url(#flg)"/><g fill="#757577" filter="url(#bl1)"><ellipse cx="153" cy="781" rx="272" ry="97" transform="rotate(-2 153 781)"/><ellipse cx="365" cy="825" rx="150" ry="78"/></g><path d="M0.0 1087.5L781.0 923.6M0.0 1028.8L781.0 875.7M0.0 977.7L781.0 834.0M0.0 932.9L781.0 797.3M0.0 893.2L781.0 764.9M0.0 857.8L781.0 736.0M0.0 826.1L781.0 710.1M0.0 797.5L781.0 686.7M0.0 771.5L781.0 665.5M0.0 747.9L781.0 646.2M0.0 726.3L781.0 628.6M0.0 706.4L781.0 612.4M0.0 688.1L781.0 597.4M0.0 671.2L781.0 583.6M0.0 655.6L781.0 570.8M0.0 641.0L781.0 558.9M0.0 627.5L781.0 547.9M0.0 614.8L781.0 537.5M0.0 602.9L781.0 527.8M0.0 591.8L781.0 518.7M0.0 581.3L781.0 510.2M0.0 571.4L781.0 502.1M0.0 562.1L781.0 494.5M0.0 553.3L781.0 487.3M0.0 545.0L781.0 480.5M-5.7 473.0L-91.0 880.0M23.5 473.0L-33.0 880.0M52.8 473.0L25.0 880.0M82.0 473.0L83.0 880.0M111.3 473.0L141.0 880.0M140.5 473.0L199.0 880.0M169.8 473.0L257.0 880.0M199.0 473.0L315.0 880.0M228.2 473.0L373.0 880.0M257.5 473.0L431.0 880.0M286.7 473.0L489.0 880.0M316.0 473.0L547.0 880.0M345.2 473.0L605.0 880.0M374.5 473.0L663.0 880.0M403.7 473.0L721.0 880.0M433.0 473.0L779.0 880.0M462.2 473.0L837.0 880.0M491.5 473.0L895.0 880.0M520.7 473.0L953.0 880.0M550.0 473.0L1011.0 880.0M579.2 473.0L1069.0 880.0M608.5 473.0L1127.0 880.0M637.7 473.0L1185.0 880.0M667.0 473.0L1243.0 880.0M696.2 473.0L1301.0 880.0M725.4 473.0L1359.0 880.0M754.7 473.0L1417.0 880.0M783.9 473.0L1475.0 880.0" stroke="#6e6e70" stroke-width="1.1" fill="none" opacity="0.6"/></g><clipPath id="ccloth"><path d="M185 16L181 33L176 55L172 88L170 118L168 153L167 181L166 226L163 258L160 285L156 313L153 335L149 361L145 385L139 408L134 426L130 443L125 468L120 495L117 523L115.6 547L116 573L118 608L121 637L126 665L132 695L139 721L146 746L153 765L161 782L154 803L146 825L161 818L180 812L189 824L197 836L204 844L211 850.5L221 854L233 856L245 856L255 854L264 848L273 840L285 826L298 811L306 790L312.5 766L327 758L331 763L334 771L334 788L332 807L334 820L339.5 829L346 830L352 827L359 818L363 807L366 793L366.6 782L364 770L378 774L393 778L406 782L410 775L410 818L413 838L417 854L420 868L422.6 883L514.7 883L521 861L529 840L535 819L538 800L538 783L534.6 767L529 752L522 739L514 727L509 720L515 711L525 699L536 688L549 673L561.6 655L575 637L587 619L595 603L601 587L605 573L606.8 558L605 543L601 529L595 513L587 500L581 488L570 469L557 451L545 435L535 421L529 408L526 393L528 378L530 368L539 339L551 293L560 260L564 226L566 181L564 139L560 101L551 64L539 31L531 21L524 16z"/></clipPath><path d="M185 16L181 33L176 55L172 88L170 118L168 153L167 181L166 226L163 258L160 285L156 313L153 335L149 361L145 385L139 408L134 426L130 443L125 468L120 495L117 523L115.6 547L116 573L118 608L121 637L126 665L132 695L139 721L146 746L153 765L161 782L154 803L146 825L161 818L180 812L189 824L197 836L204 844L211 850.5L221 854L233 856L245 856L255 854L264 848L273 840L285 826L298 811L306 790L312.5 766L327 758L331 763L334 771L334 788L332 807L334 820L339.5 829L346 830L352 827L359 818L363 807L366 793L366.6 782L364 770L378 774L393 778L406 782L410 775L410 818L413 838L417 854L420 868L422.6 883L514.7 883L521 861L529 840L535 819L538 800L538 783L534.6 767L529 752L522 739L514 727L509 720L515 711L525 699L536 688L549 673L561.6 655L575 637L587 619L595 603L601 587L605 573L606.8 558L605 543L601 529L595 513L587 500L581 488L570 469L557 451L545 435L535 421L529 408L526 393L528 378L530 368L539 339L551 293L560 260L564 226L566 181L564 139L560 101L551 64L539 31L531 21L524 16z" fill="#ecebbb" stroke="#e6e49a" stroke-width="1.2" stroke-linejoin="round"/><g clip-path="url(#ccloth)"><g filter="url(#wob)"><g filter="url(#bl8)" opacity="0.9"><path d="M113 433C131.3 393.0 198.0 416.3 223.0 433.0C248.0 449.7 251.3 496.3 263.0 533.0C274.7 569.7 286.3 613.0 293.0 653.0C299.7 693.0 308.0 738.0 303.0 773.0C298.0 808.0 289.7 853.0 263.0 863.0C236.3 873.0 168.0 864.7 143.0 833.0C118.0 801.3 118.0 739.7 113.0 673.0C108.0 606.3 94.7 473.0 113.0 433.0z" fill="#e6e4b3"/></g><g filter="url(#bl8)" opacity="0.8"><path d="M393 433C413.0 393.0 498.0 409.7 523.0 433.0C548.0 456.3 540.5 498.0 543.0 573.0C545.5 648.0 559.7 831.3 538.0 883.0C516.3 934.7 435.5 918.0 413.0 883.0C390.5 848.0 406.3 748.0 403.0 673.0C399.7 598.0 373.0 473.0 393.0 433.0z" fill="#e8e6b6"/><path d="M123 633C133.8 626.3 169.7 651.3 193.0 663.0C216.3 674.7 246.3 688.0 263.0 703.0C279.7 718.0 293.0 731.3 293.0 753.0C293.0 774.7 279.7 821.3 263.0 833.0C246.3 844.7 211.3 833.0 193.0 823.0C174.7 813.0 163.8 793.0 153.0 773.0C142.2 753.0 133.0 726.3 128.0 703.0C123.0 679.7 112.2 639.7 123.0 633.0z" fill="#dddba9"/></g><g filter="url(#bl5)" opacity="0.95"><path d="M185 23C185.2 42.7 186.7 99.3 186.0 141.0C185.3 182.7 183.5 231.0 181.0 273.0C178.5 315.0 175.3 353.0 171.0 393.0C166.7 433.0 159.7 476.3 155.0 513.0C150.3 549.7 145.0 596.3 143.0 613.0" fill="none" stroke="#f8f6d2" stroke-width="20" stroke-linecap="round"/><path d="M257 48C256.7 63.5 255.7 110.2 255.0 141.0C254.3 171.8 253.7 199.3 253.0 233.0C252.3 266.7 252.3 309.7 251.0 343.0C249.7 376.3 246.0 418.0 245.0 433.0" fill="none" stroke="#f8f6d2" stroke-width="14" stroke-linecap="round"/><path d="M283 23C283.0 42.7 282.0 109.3 283.0 141.0C284.0 172.7 287.3 191.0 289.0 213.0C290.7 235.0 292.3 263.0 293.0 273.0" fill="none" stroke="#f8f6d2" stroke-width="14" stroke-linecap="round"/><path d="M317 23C317.0 42.7 317.7 104.3 317.0 141.0C316.3 177.7 314.2 209.3 313.0 243.0C311.8 276.7 309.7 311.3 310.0 343.0C310.3 374.7 315.3 404.7 315.0 433.0C314.7 461.3 309.0 486.3 308.0 513.0C307.0 539.7 307.2 566.3 309.0 593.0C310.8 619.7 314.7 646.3 319.0 673.0C323.3 699.7 330.3 729.7 335.0 753.0C339.7 776.3 345.0 803.0 347.0 813.0" fill="none" stroke="#f8f6d2" stroke-width="16" stroke-linecap="round"/><path d="M368 23C368.0 42.7 367.5 104.3 368.0 141.0C368.5 177.7 370.2 209.3 371.0 243.0C371.8 276.7 372.0 311.3 373.0 343.0C374.0 374.7 376.0 404.7 377.0 433.0C378.0 461.3 378.3 486.3 379.0 513.0C379.7 539.7 380.3 566.3 381.0 593.0C381.7 619.7 382.7 659.7 383.0 673.0" fill="none" stroke="#f8f6d2" stroke-width="20" stroke-linecap="round"/><path d="M402 23C402.0 42.7 401.2 109.3 402.0 141.0C402.8 172.7 405.5 191.0 407.0 213.0C408.5 235.0 410.3 263.0 411.0 273.0" fill="none" stroke="#f8f6d2" stroke-width="12" stroke-linecap="round"/><path d="M432 23C432.0 42.7 430.8 104.3 432.0 141.0C433.2 177.7 436.8 209.3 439.0 243.0C441.2 276.7 443.0 311.3 445.0 343.0C447.0 374.7 449.7 404.7 451.0 433.0C452.3 461.3 452.3 483.0 453.0 513.0C453.7 543.0 454.0 579.7 455.0 613.0C456.0 646.3 456.8 681.3 459.0 713.0C461.2 744.7 464.8 776.3 468.0 803.0C471.2 829.7 476.3 861.3 478.0 873.0" fill="none" stroke="#f8f6d2" stroke-width="24" stroke-linecap="round"/><path d="M466 23C466.0 42.7 465.2 109.3 466.0 141.0C466.8 172.7 469.5 187.7 471.0 213.0C472.5 238.3 474.3 266.3 475.0 293.0C475.7 319.7 475.3 343.0 475.0 373.0C474.7 403.0 473.0 439.7 473.0 473.0C473.0 506.3 474.7 556.3 475.0 573.0" fill="none" stroke="#f8f6d2" stroke-width="14" stroke-linecap="round"/><path d="M488 23C488.0 42.7 486.5 107.7 488.0 141.0C489.5 174.3 495.5 209.3 497.0 223.0" fill="none" stroke="#f8f6d2" stroke-width="10" stroke-linecap="round"/><path d="M526 23C526.2 42.7 527.2 104.3 527.0 141.0C526.8 177.7 527.0 209.3 525.0 243.0C523.0 276.7 516.7 318.0 515.0 343.0C513.3 368.0 515.0 384.7 515.0 393.0" fill="none" stroke="#f8f6d2" stroke-width="20" stroke-linecap="round"/><path d="M203 443C206.7 454.7 217.5 488.0 225.0 513.0C232.5 538.0 240.8 566.3 248.0 593.0C255.2 619.7 262.5 648.0 268.0 673.0C273.5 698.0 280.2 719.7 281.0 743.0C281.8 766.3 274.3 801.3 273.0 813.0" fill="none" stroke="#f8f6d2" stroke-width="40" stroke-linecap="round"/><path d="M548 473C552.2 483.0 567.5 513.0 573.0 533.0C578.5 553.0 583.3 574.7 581.0 593.0C578.7 611.3 562.7 634.7 559.0 643.0" fill="none" stroke="#f8f6d2" stroke-width="26" stroke-linecap="round"/><path d="M498 753C500.8 761.3 512.8 783.0 515.0 803.0C517.2 823.0 511.7 861.3 511.0 873.0" fill="none" stroke="#f8f6d2" stroke-width="18" stroke-linecap="round"/><path d="M213 753C216.3 761.3 228.0 788.0 233.0 803.0C238.0 818.0 241.3 836.3 243.0 843.0" fill="none" stroke="#f8f6d2" stroke-width="14" stroke-linecap="round"/></g><g filter="url(#bl2)" opacity="0.85"><path d="M265 23C265.0 42.7 263.7 106.0 265.0 141.0C266.3 176.0 270.0 199.3 273.0 233.0C276.0 266.7 280.3 309.7 283.0 343.0C285.7 376.3 289.3 404.7 289.0 433.0C288.7 461.3 282.0 486.3 281.0 513.0C280.0 539.7 281.0 566.3 283.0 593.0C285.0 619.7 289.7 649.7 293.0 673.0C296.3 696.3 301.3 723.0 303.0 733.0" fill="none" stroke="#cdcb98" stroke-width="6.75" stroke-linecap="round"/><path d="M295 23C295.0 42.7 294.0 111.0 295.0 141.0C296.0 171.0 299.3 184.3 301.0 203.0C302.7 221.7 304.3 244.7 305.0 253.0" fill="none" stroke="#cdcb98" stroke-width="5.25" stroke-linecap="round"/><path d="M338 23C338.0 42.7 337.5 104.3 338.0 141.0C338.5 177.7 340.0 209.3 341.0 243.0C342.0 276.7 344.0 311.3 344.0 343.0C344.0 374.7 342.5 404.7 341.0 433.0C339.5 461.3 335.3 486.3 335.0 513.0C334.7 539.7 336.7 566.3 339.0 593.0C341.3 619.7 345.3 649.7 349.0 673.0C352.7 696.3 359.0 723.0 361.0 733.0" fill="none" stroke="#cdcb98" stroke-width="8.25" stroke-linecap="round"/><path d="M389 23C389.0 42.7 387.7 104.3 389.0 141.0C390.3 177.7 394.3 209.3 397.0 243.0C399.7 276.7 403.0 311.3 405.0 343.0C407.0 374.7 409.0 404.7 409.0 433.0C409.0 461.3 406.0 486.3 405.0 513.0C404.0 539.7 402.7 566.3 403.0 593.0C403.3 619.7 405.7 646.3 407.0 673.0C408.3 699.7 410.3 739.7 411.0 753.0" fill="none" stroke="#cdcb98" stroke-width="6.75" stroke-linecap="round"/><path d="M415 23C415.0 42.7 414.3 109.3 415.0 141.0C415.7 172.7 417.7 191.0 419.0 213.0C420.3 235.0 422.3 263.0 423.0 273.0" fill="none" stroke="#cdcb98" stroke-width="4.5" stroke-linecap="round"/><path d="M447 23C447.0 42.7 446.0 111.0 447.0 141.0C448.0 171.0 451.3 181.0 453.0 203.0C454.7 225.0 456.3 261.3 457.0 273.0" fill="none" stroke="#cdcb98" stroke-width="4.5" stroke-linecap="round"/><path d="M479 23C479.0 42.7 478.0 104.3 479.0 141.0C480.0 177.7 483.2 209.3 485.0 243.0C486.8 276.7 488.7 311.3 490.0 343.0C491.3 374.7 492.2 404.7 493.0 433.0C493.8 461.3 494.3 486.3 495.0 513.0C495.7 539.7 496.0 566.3 497.0 593.0C498.0 619.7 500.3 659.7 501.0 673.0" fill="none" stroke="#cdcb98" stroke-width="6" stroke-linecap="round"/><path d="M501 23C501.3 42.7 501.3 107.7 503.0 141.0C504.7 174.3 509.0 201.0 511.0 223.0C513.0 245.0 514.3 264.7 515.0 273.0" fill="none" stroke="#cdcb98" stroke-width="4.5" stroke-linecap="round"/><path d="M225 203C225.2 214.7 225.3 248.0 226.0 273.0C226.7 298.0 229.2 326.3 229.0 353.0C228.8 379.7 225.7 419.7 225.0 433.0" fill="none" stroke="#cdcb98" stroke-width="5.25" stroke-linecap="round"/><path d="M203 23C202.7 42.7 201.7 106.0 201.0 141.0C200.3 176.0 200.0 204.3 199.0 233.0C198.0 261.7 195.7 299.7 195.0 313.0" fill="none" stroke="#cdcb98" stroke-width="4.5" stroke-linecap="round"/><path d="M548 53C549.5 67.7 555.2 111.0 557.0 141.0C558.8 171.0 559.7 204.3 559.0 233.0C558.3 261.7 554.0 299.7 553.0 313.0" fill="none" stroke="#cdcb98" stroke-width="4.5" stroke-linecap="round"/></g><g filter="url(#bl5)" opacity="0.8"><path d="M135 573C139.7 579.7 150.0 601.3 163.0 613.0C176.0 624.7 196.3 636.3 213.0 643.0C229.7 649.7 254.7 651.3 263.0 653.0" fill="none" stroke="#dad8a6" stroke-width="16" stroke-linecap="round"/></g><g filter="url(#bl3)" opacity="0.8"><path d="M195 723C197.3 731.3 204.7 756.3 209.0 773.0C213.3 789.7 219.0 814.7 221.0 823.0" fill="none" stroke="#cdcb98" stroke-width="8" stroke-linecap="round"/></g><g filter="url(#bl3)" opacity="0.7"><path d="M433 773C435.0 781.3 440.3 806.3 445.0 823.0C449.7 839.7 458.3 864.7 461.0 873.0" fill="none" stroke="#cdcb98" stroke-width="10" stroke-linecap="round"/><path d="M518 513C518.2 523.0 519.5 553.0 519.0 573.0C518.5 593.0 516.7 614.7 515.0 633.0C513.3 651.3 510.0 674.7 509.0 683.0" fill="none" stroke="#cdcb98" stroke-width="8" stroke-linecap="round"/></g></g></g><path d="M185 16L181 33L176 55L172 88L170 118L168 153L167 181L166 226L163 258L160 285L156 313L153 335L149 361L145 385L139 408L134 426L130 443L125 468L120 495L117 523L115.6 547L116 573L118 608L121 637L126 665L132 695L139 721L146 746L153 765L161 782L154 803L146 825M298 811L306 790L312.5 766L327 758M364 770L378 774L393 778L406 782L410 775M509 720L515 711L525 699L536 688L549 673L561.6 655L575 637L587 619L595 603L601 587L605 573L606.8 558" fill="none" stroke="#ece622" stroke-width="1.8" stroke-linejoin="round" stroke-linecap="round"/><path d="M606.8 558L605 543L601 529L595 513L587 500L581 488L570 469L557 451L545 435L535 421L529 408L526 393L528 378L530 368L539 339L551 293L560 260L564 226L566 181L564 139L560 101L551 64L539 31L531 21L524 16" fill="none" stroke="#e8e455" stroke-width="1.3" stroke-linejoin="round" opacity="0.8"/><path d="M237.4 78.8L245 87.5L247 107L240.7 131L233 166L226.4 190L213.8 193.6L207.8 175L204.6 153L210 122.5L219.9 96L228.6 83z" fill="#857f42"/><path d="M225 195L223 210L226 203z" fill="#857f42"/><path d="M199 21L213 23L210 33L217.7 50L210 72L206.8 76.6L203.5 43.8L209 30.6z" fill="#857f42"/><path d="M240.7 19.7L249.4 14L254.9 24L256.6 51L252.7 41.6L249.4 26z" fill="#857f42"/><path d="M319.4 21.9L327 14L333.6 21.9L323.8 28z" fill="#857f42"/><path d="M337 41.6L338 30.6L353 23L349 32.8L341.3 43.8z" fill="#857f42"/><path d="M374 18.6L384 18.6L387 39L385 46L379.6 28z" fill="#857f42"/><path d="M366.5 30.6L369.7 27L373 32.8z" fill="#857f42"/><path d="M483.5 11L491 16L497.7 21.9L498.8 32.8L489 36L482.4 28.4z" fill="#857f42"/><path d="M475.8 47L480 42.7L477 54.7z" fill="#857f42"/><path d="M230 260L215 270L224.6 282L236.6 283.6L222 305L210 307.5L208 314.7L230 329L235 342.6L251 344.7L260.5 350.6L275 304L256.5 301.4L244.5 297.4L240 288L250 275z" fill="#857f42"/><path d="M542.6 482.5L524 491L529.4 502.7L519.7 517.7L529.4 532.6L542.6 532.6L534.7 516.8L540.9 495.7z" fill="#857f42"/><path d="M539 554.7L543.5 548.5L547 554.7z" fill="#857f42"/><path d="M327 565L337.7 570.6L345 578L336 581.5z" fill="#857f42"/><path d="M494.8 754.8L516.5 769L507.5 792.7L500 798L484 796L487.6 778z" fill="#857f42"/><path d="M502 689.8L509 720.5L496.6 713z" fill="#857f42"/><path d="M374 805L409 799L413 838L421 880L410 880L393 845z" fill="#8b8644" stroke="#e0dc30" stroke-width="1.2"/><rect x="189" y="0" width="335" height="14" fill="#a9d3e2"/><radialGradient id="rd" cx="0.35" cy="0.65" r="0.75"><stop offset="0" stop-color="#e02222"/><stop offset="0.55" stop-color="#b81010"/><stop offset="1" stop-color="#8e0808"/></radialGradient><circle cx="544" cy="416.5" r="11.8" fill="url(#rd)"/><circle cx="538.7" cy="544.5" r="5" fill="#fbfbf0" opacity="0.85"/><circle cx="538.7" cy="542.3" r="4" fill="#1414a4"/><path d="M544.7 417.3l0 13l3.200-3l2.600 5.400l2.200-1.100l-2.600-5.200l4.400-0.400z" fill="#ececec" stroke="#777" stroke-width="0.6"/><g stroke="#e4e4e4" stroke-width="1.3" fill="#e4e4e4"><path d="M558.3 437.2h12M564.3 431.2v12" fill="none"/><path d="M556.3 437.2l2.200-2.200v4.400zM572.3 437.2l-2.200-2.200v4.400zM564.3 429.2l-2.200 2.200h4.400zM564.3 445.2l-2.200-2.200h4.400z" stroke="none"/></g></svg>
<div class="b" style="left:36px;top:126px;width:783px;height:1px;background:#1a1a1b;"></div>
<div class="b" style="left:36px;top:127px;width:1px;height:880px;background:#2a2a2c;"></div>
<div class="b" style="left:818px;top:127px;width:2px;height:880px;background:#1a1a1b;"></div>
<div class="b" style="left:47.5px;top:139.5px;width:25px;height:24.5px;background:#464648;border:1px solid #626264;box-sizing:border-box;"></div>
<div class="b" style="left:47.5px;top:168.7px;width:25px;height:24.5px;background:#2c4458;border:1px solid #4a5a66;box-sizing:border-box;"></div>
<div class="b" style="left:47.5px;top:197.8px;width:25px;height:24.5px;background:#464648;border:1px solid #626264;box-sizing:border-box;"></div>
<div class="b" style="left:47.5px;top:226.6px;width:25px;height:24.5px;background:#30343a;border:1px solid #8e8478;box-sizing:border-box;"></div>
<div class="b" style="left:47.5px;top:255.75px;width:25px;height:24.5px;background:#3c3c3e;border:1px solid #444446;box-sizing:border-box;"></div>
<div class="b" style="left:47.5px;top:285px;width:25px;height:24.5px;background:#464648;border:1px solid #5a5a5c;box-sizing:border-box;"></div>
<div class="b" style="left:47.5px;top:313.5px;width:25px;height:24.5px;background:#26445c;border:1px solid #6a625a;box-sizing:border-box;"></div>
<svg class="b" style="left:0px;top:0px;" width="100" height="345"><path d="M56 144l-5 3l2 4l2-1v9h10v-9l2 1l2-4l-5-3l-2.5 1.5z" fill="#e4e4e4"/><circle cx="66.5" cy="181" r="3.4" fill="#45b0e2"/><circle cx="64.5962" cy="185.596" r="2.2" fill="#45b0e2"/><circle cx="60" cy="187.5" r="2.2" fill="#45b0e2"/><circle cx="55.4038" cy="185.596" r="3.4" fill="#45b0e2"/><circle cx="53.5" cy="181" r="2.2" fill="#45b0e2"/><circle cx="55.4038" cy="176.404" r="2.2" fill="#45b0e2"/><circle cx="60" cy="174.5" r="3.4" fill="#45b0e2"/><circle cx="64.5962" cy="176.404" r="2.2" fill="#45b0e2"/><circle cx="60" cy="205" r="4.200" fill="#d4d4d4"/><path d="M53.500 219q-1-7 3.500-9h6q4.500 2 3.500 9z" fill="#c0c0c0"/><path d="M53 232l14-2l-1 14l-12 1z" fill="#1f8fe8"/><path d="M53 232l3 0l-1 10l-2 3z" fill="#e8f2fa"/><path d="M55 271l5.500-9l5.500 1l-3 10q-4 2-8-2z" fill="#cacaca"/><path d="M55 293q0-6 5.500-6t5.500 6q0 4-3 6v2l3 3h-11.500l3.500-3v-2q-3-2-3-6z" fill="#c2c2c2"/><circle cx="60" cy="326" r="8" fill="#2d7fb8"/><path d="M53 323q7-4 14 2M55 330q5-4 11-1" stroke="#56b0e0" stroke-width="1.2" fill="none"/></svg>
<div class="b" style="left:825px;top:126px;width:785px;height:883px;background:#f4f4f4;"></div>
<div class="b" style="left:827px;top:128px;width:781px;height:879px;background:#c8c8c8;"></div>
<svg class="b" style="left:0px;top:0px;" width="1920" height="1080"><path d="M1590.5 128V1007" stroke="#cfcfcf" stroke-width="1" opacity="0.55"/><path d="M1511.5 128V1007" stroke="#cfcfcf" stroke-width="1" opacity="0.55"/><path d="M1432.5 128V1007" stroke="#cfcfcf" stroke-width="1" opacity="0.55"/><path d="M1274.5 128V1007" stroke="#cfcfcf" stroke-width="1" opacity="0.55"/><path d="M1195.5 128V1007" stroke="#cfcfcf" stroke-width="1" opacity="0.55"/><path d="M1116.5 128V1007" stroke="#cfcfcf" stroke-width="1" opacity="0.55"/><path d="M1037.5 128V1007" stroke="#cfcfcf" stroke-width="1" opacity="0.55"/><path d="M958.5 128V1007" stroke="#cfcfcf" stroke-width="1" opacity="0.55"/><path d="M879.5 128V1007" stroke="#cfcfcf" stroke-width="1" opacity="0.55"/><path d="M827 952.5H1608" stroke="#cfcfcf" stroke-width="1" opacity="0.55"/><path d="M827 873.5H1608" stroke="#cfcfcf" stroke-width="1" opacity="0.55"/><path d="M827 794.5H1608" stroke="#cfcfcf" stroke-width="1" opacity="0.55"/><path d="M827 636.5H1608" stroke="#cfcfcf" stroke-width="1" opacity="0.55"/><path d="M827 557.5H1608" stroke="#cfcfcf" stroke-width="1" opacity="0.55"/><path d="M827 478.5H1608" stroke="#cfcfcf" stroke-width="1" opacity="0.55"/><path d="M827 399.5H1608" stroke="#cfcfcf" stroke-width="1" opacity="0.55"/><path d="M827 320.5H1608" stroke="#cfcfcf" stroke-width="1" opacity="0.55"/><path d="M827 241.5H1608" stroke="#cfcfcf" stroke-width="1" opacity="0.55"/><path d="M827 162.5H1608" stroke="#cfcfcf" stroke-width="1" opacity="0.55"/><path d="M1037.500 128V1007" stroke="#bababa" stroke-width="1" opacity="0.8"/><path d="M827 873.500H1608" stroke="#bcbcbc" stroke-width="1" opacity="0.8"/><path d="M1353.5 128V1007" stroke="#8a8a8a" stroke-width="1"/><path d="M827 715.5H1608" stroke="#8e8e8e" stroke-width="1"/><defs><filter id="cb" x="-50%" y="-50%" width="200%" height="200%"><feGaussianBlur stdDeviation="1.6"/></filter><clipPath id="c2d"><rect x="827" y="128" width="781" height="879"/></clipPath></defs><g clip-path="url(#c2d)"><g fill="none" stroke="#a4d8e8" filter="url(#cb)"><circle cx="826" cy="577" r="34" stroke-width="6.5" opacity="0.65"/><circle cx="826" cy="577" r="44" stroke-width="4" opacity="0.25"/></g></g><rect x="1061" y="421" width="195" height="23" fill="#b3b3b3" stroke="#787878" stroke-width="1"/><path d="M1062.0 422.0L1066.8 422.0M1062.0 422.0L1062.0 428.6M1062.0 422.0L1067.8 426.5M1066.8 422.0L1072.1 422.0M1066.8 422.0L1067.8 426.5M1066.8 422.0L1070.8 426.4M1072.1 422.0L1070.8 426.4M1078.5 422.0L1081.7 422.0M1078.5 422.0L1075.1 428.3M1081.7 422.0L1086.8 422.0M1081.7 422.0L1081.4 428.6M1081.7 422.0L1086.3 429.1M1086.8 422.0L1092.0 422.0M1092.0 422.0L1093.1 425.3M1095.4 422.0L1101.6 422.0M1095.4 422.0L1095.5 428.9M1095.4 422.0L1101.5 429.2M1101.6 422.0L1107.1 422.0M1101.6 422.0L1101.5 429.2M1107.1 422.0L1112.7 422.0M1107.1 422.0L1112.0 428.4M1112.7 422.0L1114.8 422.0M1112.7 422.0L1112.0 428.4M1114.8 422.0L1115.5 425.6M1120.6 422.0L1120.7 429.1M1120.6 422.0L1127.4 425.7M1124.7 422.0L1132.5 422.0M1124.7 422.0L1127.4 425.7M1124.7 422.0L1130.3 425.7M1132.5 422.0L1137.0 422.0M1132.5 422.0L1130.3 425.7M1137.0 422.0L1139.3 422.0M1137.0 422.0L1134.5 428.4M1139.3 422.0L1148.1 422.0M1139.3 422.0L1139.9 427.5M1148.1 422.0L1152.9 422.0M1148.1 422.0L1145.9 426.0M1148.1 422.0L1152.0 425.8M1152.9 422.0L1156.6 425.7M1156.6 422.0L1161.4 422.0M1156.6 422.0L1156.6 425.7M1156.6 422.0L1160.7 426.1M1161.4 422.0L1165.0 429.1M1164.6 422.0L1168.9 422.0M1164.6 422.0L1165.0 429.1M1168.9 422.0L1172.1 426.5M1175.9 422.0L1179.0 422.0M1175.9 422.0L1177.4 426.1M1175.9 422.0L1180.3 428.7M1179.0 422.0L1184.5 422.0M1179.0 422.0L1180.3 428.7M1179.0 422.0L1186.3 425.7M1184.5 422.0L1189.6 422.0M1184.5 422.0L1186.3 425.7M1189.6 422.0L1193.7 422.0M1189.6 422.0L1192.6 426.1M1189.6 422.0L1194.6 428.3M1193.7 422.0L1200.4 422.0M1193.7 422.0L1194.6 428.3M1193.7 422.0L1199.9 426.4M1200.4 422.0L1205.3 422.0M1200.4 422.0L1199.9 426.4M1200.4 422.0L1203.8 425.6M1205.3 422.0L1211.8 422.0M1205.3 422.0L1203.8 425.6M1211.8 422.0L1215.5 422.0M1211.8 422.0L1210.8 426.2M1215.5 422.0L1220.9 422.0M1215.5 422.0L1220.2 429.1M1220.9 422.0L1225.3 422.0M1225.3 422.0L1230.9 422.0M1225.3 422.0L1225.2 427.5M1230.9 422.0L1235.0 422.0M1235.0 422.0L1239.3 422.0M1235.0 422.0L1233.8 428.9M1239.3 422.0L1247.1 422.0M1239.3 422.0L1241.4 426.2M1247.1 422.0L1252.0 422.0M1247.1 422.0L1243.9 428.2M1247.1 422.0L1251.8 426.0M1252.0 422.0L1255.0 422.0M1252.0 422.0L1251.8 426.0M1252.0 422.0L1255.0 429.1M1255.0 422.0L1255.0 429.1M1062.0 428.6L1067.8 426.5M1067.8 426.5L1070.8 426.4M1067.8 426.5L1067.4 432.2M1070.8 426.4L1075.1 428.3M1070.8 426.4L1070.3 430.7M1070.8 426.4L1078.7 431.5M1075.1 428.3L1081.4 428.6M1075.1 428.3L1078.7 431.5M1075.1 428.3L1082.6 431.5M1081.4 428.6L1086.3 429.1M1081.4 428.6L1082.6 431.5M1081.4 428.6L1088.0 432.9M1086.3 429.1L1093.1 425.3M1086.3 429.1L1088.0 432.9M1086.3 429.1L1090.9 431.2M1095.5 428.9L1101.5 429.2M1095.5 428.9L1097.5 430.8M1101.5 429.2L1106.1 425.5M1101.5 429.2L1100.5 432.7M1101.5 429.2L1107.9 433.0M1106.1 425.5L1112.0 428.4M1106.1 425.5L1107.9 433.0M1106.1 425.5L1110.6 434.2M1112.0 428.4L1115.5 425.6M1112.0 428.4L1110.6 434.2M1115.5 425.6L1115.3 430.6M1115.5 425.6L1120.5 432.3M1120.7 429.1L1127.4 425.7M1120.7 429.1L1120.5 432.3M1120.7 429.1L1124.6 431.2M1127.4 425.7L1130.3 425.7M1127.4 425.7L1124.6 431.2M1127.4 425.7L1130.8 432.8M1134.5 428.4L1134.8 431.9M1134.5 428.4L1142.7 434.4M1139.9 427.5L1145.9 426.0M1139.9 427.5L1142.7 434.4M1145.9 426.0L1146.8 433.3M1152.0 425.8L1156.6 425.7M1152.0 425.8L1151.4 431.1M1156.6 425.7L1160.7 426.1M1160.7 426.1L1165.0 429.1M1160.7 426.1L1162.6 433.3M1165.0 429.1L1172.1 426.5M1165.0 429.1L1167.8 430.6M1165.0 429.1L1171.4 432.4M1172.1 426.5L1177.4 426.1M1172.1 426.5L1171.4 432.4M1172.1 426.5L1176.7 431.8M1177.4 426.1L1180.3 428.7M1177.4 426.1L1176.7 431.8M1180.3 428.7L1186.3 425.7M1186.3 425.7L1192.6 426.1M1186.3 425.7L1185.9 433.4M1186.3 425.7L1192.3 433.4M1192.6 426.1L1194.6 428.3M1192.6 426.1L1192.3 433.4M1194.6 428.3L1199.9 426.4M1194.6 428.3L1196.4 433.7M1199.9 426.4L1202.2 431.9M1203.8 425.6L1210.8 426.2M1203.8 425.6L1206.3 434.1M1203.8 425.6L1211.9 432.2M1210.8 426.2L1215.8 426.7M1210.8 426.2L1211.9 432.2M1210.8 426.2L1216.6 434.0M1215.8 426.7L1220.2 429.1M1215.8 426.7L1216.6 434.0M1220.2 429.1L1225.2 427.5M1220.2 429.1L1220.7 433.0M1225.2 427.5L1231.7 426.0M1231.7 426.0L1230.7 430.8M1231.7 426.0L1235.8 434.5M1233.8 428.9L1241.4 426.2M1233.8 428.9L1235.8 434.5M1241.4 426.2L1243.9 428.2M1241.4 426.2L1241.7 433.4M1241.4 426.2L1244.7 433.4M1243.9 428.2L1251.8 426.0M1243.9 428.2L1244.7 433.4M1243.9 428.2L1250.4 432.3M1251.8 426.0L1250.4 432.3M1251.8 426.0L1255.0 433.9M1255.0 429.1L1255.0 433.9M1062.0 434.0L1067.4 432.2M1062.0 434.0L1062.0 436.1M1067.4 432.2L1070.3 430.7M1067.4 432.2L1067.9 435.9M1070.3 430.7L1078.7 431.5M1070.3 430.7L1072.3 437.7M1070.3 430.7L1075.8 438.5M1078.7 431.5L1082.6 431.5M1078.7 431.5L1075.8 438.5M1082.6 431.5L1088.0 432.9M1088.0 432.9L1090.9 431.2M1090.9 431.2L1097.5 430.8M1090.9 431.2L1097.4 436.6M1097.5 430.8L1100.5 432.7M1097.5 430.8L1100.3 439.4M1100.5 432.7L1107.9 433.0M1107.9 433.0L1110.6 434.2M1110.6 434.2L1115.3 430.6M1110.6 434.2L1113.1 437.1M1115.3 430.6L1120.5 432.3M1115.3 430.6L1117.1 436.5M1115.3 430.6L1121.1 439.0M1120.5 432.3L1124.6 431.2M1120.5 432.3L1121.1 439.0M1120.5 432.3L1128.0 439.3M1124.6 431.2L1130.8 432.8M1124.6 431.2L1128.0 439.3M1124.6 431.2L1130.8 438.1M1130.8 432.8L1134.8 431.9M1130.8 432.8L1130.8 438.1M1134.8 431.9L1142.7 434.4M1142.7 434.4L1146.8 433.3M1142.7 434.4L1141.2 439.1M1142.7 434.4L1147.5 438.6M1146.8 433.3L1147.5 438.6M1151.4 431.1L1154.2 430.6M1151.4 431.1L1152.9 436.9M1154.2 430.6L1162.6 433.3M1154.2 430.6L1154.7 437.6M1162.6 433.3L1167.8 430.6M1162.6 433.3L1160.1 436.6M1162.6 433.3L1165.6 438.3M1171.4 432.4L1176.7 431.8M1171.4 432.4L1170.8 437.0M1171.4 432.4L1177.2 439.7M1176.7 431.8L1182.8 430.8M1176.7 431.8L1177.2 439.7M1176.7 431.8L1180.6 436.0M1182.8 430.8L1185.9 433.4M1182.8 430.8L1180.6 436.0M1182.8 430.8L1183.8 439.2M1185.9 433.4L1192.3 433.4M1185.9 433.4L1183.8 439.2M1192.3 433.4L1196.4 433.7M1192.3 433.4L1188.8 438.6M1192.3 433.4L1195.9 437.0M1196.4 433.7L1202.2 431.9M1196.4 433.7L1195.9 437.0M1202.2 431.9L1206.3 434.1M1202.2 431.9L1201.7 435.8M1206.3 434.1L1211.9 432.2M1206.3 434.1L1204.1 437.6M1206.3 434.1L1208.6 439.1M1211.9 432.2L1216.6 434.0M1211.9 432.2L1208.6 439.1M1216.6 434.0L1220.7 433.0M1216.6 434.0L1214.4 436.3M1220.7 433.0L1224.8 432.8M1220.7 433.0L1218.5 438.3M1224.8 432.8L1225.1 438.3M1224.8 432.8L1230.9 439.0M1230.7 430.8L1235.8 434.5M1230.7 430.8L1237.0 438.5M1235.8 434.5L1241.7 433.4M1235.8 434.5L1237.0 438.5M1235.8 434.5L1239.0 437.7M1241.7 433.4L1244.7 433.4M1241.7 433.4L1239.0 437.7M1244.7 433.4L1250.4 432.3M1244.7 433.4L1243.8 435.8M1250.4 432.3L1255.0 433.9M1250.4 432.3L1249.9 438.6M1255.0 433.9L1255.0 436.5M1062.0 436.1L1067.9 435.9M1062.0 436.1L1062.0 443.0M1062.0 436.1L1066.0 443.0M1067.9 435.9L1072.3 437.7M1067.9 435.9L1066.0 443.0M1067.9 435.9L1071.3 443.0M1072.3 437.7L1075.8 438.5M1072.3 437.7L1071.3 443.0M1075.8 438.5L1081.9 443.0M1081.8 438.2L1081.9 443.0M1081.8 438.2L1087.2 443.0M1088.4 436.8L1089.7 437.0M1089.7 437.0L1097.4 436.6M1089.7 437.0L1092.7 443.0M1089.7 437.0L1096.2 443.0M1097.4 436.6L1100.3 439.4M1097.4 436.6L1096.2 443.0M1097.4 436.6L1102.8 443.0M1100.3 439.4L1107.2 437.5M1100.3 439.4L1102.8 443.0M1107.2 437.5L1113.1 437.1M1107.2 437.5L1109.8 443.0M1113.1 437.1L1117.1 436.5M1113.1 437.1L1109.8 443.0M1117.1 436.5L1121.1 439.0M1117.1 436.5L1118.2 443.0M1117.1 436.5L1122.3 443.0M1121.1 439.0L1128.0 439.3M1121.1 439.0L1122.3 443.0M1128.0 439.3L1130.8 438.1M1128.0 439.3L1131.1 443.0M1130.8 438.1L1135.5 436.3M1130.8 438.1L1131.1 443.0M1130.8 438.1L1136.7 443.0M1135.5 436.3L1141.2 439.1M1135.5 436.3L1136.7 443.0M1141.2 439.1L1147.5 438.6M1141.2 439.1L1142.8 443.0M1141.2 439.1L1145.6 443.0M1147.5 438.6L1152.9 436.9M1147.5 438.6L1145.6 443.0M1147.5 438.6L1151.4 443.0M1152.9 436.9L1154.7 437.6M1152.9 436.9L1151.4 443.0M1152.9 436.9L1157.5 443.0M1154.7 437.6L1160.1 436.6M1154.7 437.6L1157.5 443.0M1154.7 437.6L1162.2 443.0M1160.1 436.6L1162.2 443.0M1160.1 436.6L1167.7 443.0M1165.6 438.3L1170.8 437.0M1165.6 438.3L1167.7 443.0M1170.8 437.0L1170.7 443.0M1177.2 439.7L1180.6 436.0M1183.8 439.2L1188.8 438.6M1183.8 439.2L1186.6 443.0M1188.8 438.6L1191.9 443.0M1188.8 438.6L1196.2 443.0M1195.9 437.0L1201.7 435.8M1195.9 437.0L1196.2 443.0M1201.7 435.8L1204.1 437.6M1201.7 435.8L1201.4 443.0M1201.7 435.8L1204.4 443.0M1204.1 437.6L1208.6 439.1M1204.1 437.6L1204.4 443.0M1208.6 439.1L1214.4 436.3M1208.6 439.1L1212.1 443.0M1208.6 439.1L1217.3 443.0M1214.4 436.3L1218.5 438.3M1214.4 436.3L1217.3 443.0M1214.4 436.3L1222.3 443.0M1218.5 438.3L1225.1 438.3M1218.5 438.3L1222.3 443.0M1218.5 438.3L1225.5 443.0M1225.1 438.3L1225.5 443.0M1225.1 438.3L1231.4 443.0M1230.9 439.0L1237.0 438.5M1230.9 439.0L1231.4 443.0M1230.9 439.0L1234.5 443.0M1237.0 438.5L1239.0 437.7M1237.0 438.5L1234.5 443.0M1237.0 438.5L1241.8 443.0M1239.0 437.7L1243.8 435.8M1239.0 437.7L1241.8 443.0M1239.0 437.7L1246.5 443.0M1243.8 435.8L1249.9 438.6M1243.8 435.8L1246.5 443.0M1243.8 435.8L1249.4 443.0M1249.9 438.6L1249.4 443.0M1249.9 438.6L1255.0 443.0M1066.0 443.0L1071.3 443.0M1071.3 443.0L1077.6 443.0M1081.9 443.0L1087.2 443.0M1087.2 443.0L1092.7 443.0M1092.7 443.0L1096.2 443.0M1108.2 443.0L1109.8 443.0M1109.8 443.0L1118.2 443.0M1118.2 443.0L1122.3 443.0M1122.3 443.0L1124.9 443.0M1131.1 443.0L1136.7 443.0M1136.7 443.0L1142.8 443.0M1142.8 443.0L1145.6 443.0M1145.6 443.0L1151.4 443.0M1151.4 443.0L1157.5 443.0M1157.5 443.0L1162.2 443.0M1162.2 443.0L1167.7 443.0M1167.7 443.0L1170.7 443.0M1170.7 443.0L1176.4 443.0M1176.4 443.0L1179.6 443.0M1179.6 443.0L1186.6 443.0M1186.6 443.0L1191.9 443.0M1196.2 443.0L1201.4 443.0M1201.4 443.0L1204.4 443.0M1212.1 443.0L1217.3 443.0M1217.3 443.0L1222.3 443.0M1222.3 443.0L1225.5 443.0M1225.5 443.0L1231.4 443.0M1231.4 443.0L1234.5 443.0M1249.4 443.0L1255.0 443.0" stroke="#c6c6c6" stroke-width="0.9" fill="none" opacity="0.9"/><rect x="1061" y="421" width="195" height="23" fill="none" stroke="#777" stroke-width="1"/><circle cx="1061" cy="421" r="2.8" fill="#2c2c2c"/><circle cx="1256" cy="421" r="2.8" fill="#2c2c2c"/><circle cx="1061" cy="444" r="2.8" fill="#2c2c2c"/><circle cx="1256" cy="444" r="2.8" fill="#2c2c2c"/><rect x="1006.5" y="480.5" width="304" height="200" fill="#f6b25a"/><rect x="1008" y="482" width="301" height="197" fill="#fb3019"/><rect x="1004.5" y="478.5" width="5" height="5" fill="#f2d21c"/><rect x="1307.5" y="478.5" width="5" height="5" fill="#f2d21c"/><rect x="1004.5" y="677.5" width="5" height="5" fill="#f2d21c"/><rect x="1307.5" y="677.5" width="5" height="5" fill="#f2d21c"/><path d="M1206.7 563.0L1214.8 565.1L1213.0 567.2L1205.9 568.7L1206.8 570.9L1204.0 572.7L1203.3 574.9L1201.3 576.9L1191.4 576.7L1187.1 577.9L1189.0 581.7L1181.4 581.6L1178.3 583.7L1169.3 581.8L1165.9 584.2L1161.0 585.8L1154.3 584.2L1149.1 587.3L1142.9 587.1L1138.0 583.4L1132.8 583.1L1125.8 584.6L1118.4 585.3L1115.9 582.4L1112.0 580.8L1106.0 580.3L1104.9 577.9L1099.5 577.1L1094.0 576.1L1090.2 574.5L1090.3 572.3L1088.1 570.5L1086.5 568.7L1082.5 567.0L1083.7 564.9L1086.6 563.0L1077.3 560.9L1081.4 558.9L1081.7 556.9L1088.6 555.5L1082.2 552.4L1086.6 550.7L1097.0 550.7L1098.5 548.6L1099.3 546.1L1103.9 544.7L1107.4 542.7L1115.6 543.5L1118.9 541.1L1125.3 540.9L1132.0 541.8L1137.1 540.4L1142.9 539.0L1149.1 539.1L1154.7 540.7L1160.7 540.7L1164.4 543.4L1170.4 543.3L1178.5 542.1L1181.3 544.5L1184.1 546.4L1191.3 546.6L1196.7 547.7L1200.2 549.4L1200.5 551.7L1203.9 553.3L1206.9 555.1L1211.8 556.7L1210.2 559.0L1209.5 561.0z" fill="#f2985a"/><path d="M1220.7 597.0L1220.3 599.2L1208.6 600.8L1207.8 602.7L1215.2 605.5L1211.8 607.3L1208.4 609.1L1201.5 610.2L1201.2 612.5L1197.3 614.2L1192.9 615.6L1184.9 615.7L1182.3 617.8L1177.1 618.8L1173.7 621.0L1169.2 622.9L1162.8 623.5L1155.3 622.5L1149.1 622.5L1142.9 622.0L1137.0 621.1L1131.3 621.0L1124.9 622.5L1119.3 621.5L1113.4 621.3L1105.3 622.5L1101.4 620.3L1095.9 619.4L1093.1 617.1L1090.2 615.3L1083.4 614.9L1081.1 612.9L1073.8 612.3L1065.2 611.7L1065.6 609.1L1068.6 606.4L1058.1 605.5L1057.6 603.4L1057.1 601.2L1054.2 599.2L1055.7 597.0L1055.6 594.9L1061.8 593.0L1055.3 590.5L1057.3 588.4L1068.8 587.6L1064.7 584.7L1068.2 582.9L1074.3 581.8L1077.4 580.0L1081.9 578.6L1082.9 575.9L1091.1 576.0L1094.1 573.7L1102.4 574.4L1105.3 571.5L1111.4 570.7L1118.9 571.9L1124.7 571.0L1130.5 569.3L1137.0 570.1L1143.1 571.1L1148.7 572.5L1154.7 572.4L1161.9 571.5L1165.3 574.3L1174.7 572.3L1176.2 575.7L1185.9 574.6L1186.1 577.8L1196.2 577.3L1198.3 579.6L1200.1 581.7L1203.7 583.4L1208.2 584.9L1210.1 586.9L1208.9 589.2L1209.3 591.2L1214.2 592.9L1220.2 594.8z" fill="#f2985a"/><path d="M1203.6 565.0L1204.2 566.9L1206.6 569.0L1200.9 570.5L1199.1 572.3L1196.9 574.1L1190.6 575.0L1189.2 577.1L1185.6 578.7L1181.7 580.2L1173.1 579.6L1168.8 580.9L1162.7 581.0L1158.7 583.5L1152.3 583.5L1146.0 581.7L1139.5 584.3L1133.0 583.9L1127.6 582.5L1122.0 581.7L1118.6 579.7L1114.6 578.4L1107.0 578.4L1105.9 576.2L1101.4 575.1L1097.8 573.6L1097.0 571.8L1091.2 570.5L1089.8 568.7L1085.2 567.0L1087.8 565.0L1087.0 563.1L1089.3 561.3L1089.4 559.3L1093.4 557.7L1097.6 556.3L1095.3 553.6L1099.5 552.0L1105.1 550.9L1110.8 550.0L1117.9 549.9L1123.4 549.3L1128.7 548.5L1134.8 548.6L1139.7 546.3L1146.0 547.3L1152.4 546.1L1157.8 547.7L1165.2 546.6L1170.9 547.6L1172.7 550.7L1178.5 551.1L1187.4 550.7L1188.9 553.0L1196.5 553.6L1195.4 556.1L1195.4 558.2L1202.3 559.3L1205.3 561.1L1201.6 563.2z" fill="#ecaa72"/><path d="M1208.7 597.0L1210.3 598.9L1209.5 600.8L1203.0 602.3L1199.9 603.9L1200.8 606.0L1197.0 607.4L1197.9 609.9L1192.9 611.2L1187.8 612.4L1182.6 613.6L1178.0 614.9L1170.0 614.6L1165.7 616.1L1158.9 616.0L1154.7 618.6L1146.9 616.5L1141.3 618.9L1135.0 616.7L1128.2 618.4L1122.6 617.0L1116.4 616.7L1108.8 617.2L1106.6 614.2L1101.3 613.4L1091.2 614.4L1088.9 612.2L1087.6 610.0L1076.6 610.2L1073.2 608.4L1077.5 605.6L1072.2 604.3L1073.1 602.3L1070.0 600.7L1066.1 598.9L1070.3 597.0L1065.3 595.1L1072.5 593.5L1072.7 591.7L1068.6 589.3L1074.9 588.0L1077.7 586.4L1079.8 584.5L1084.7 583.2L1089.7 582.1L1096.6 581.7L1097.6 578.9L1102.2 577.3L1108.2 576.4L1115.6 576.6L1122.5 576.9L1128.7 576.6L1134.7 575.5L1141.3 575.5L1147.0 577.3L1153.2 577.3L1159.5 577.4L1165.9 577.7L1173.1 577.7L1177.1 579.5L1179.3 581.7L1189.3 581.1L1190.9 583.3L1195.6 584.6L1196.6 586.6L1201.3 588.0L1203.4 589.7L1209.0 591.2L1204.0 593.5L1209.2 595.1z" fill="#ecaa72"/><path d="M1098.0 559.2L1100.6 556.1L1103.2 555.4L1105.8 552.3L1108.4 552.0L1111.0 553.5L1113.6 552.1L1116.2 550.7L1118.8 549.9L1121.4 549.6L1124.0 550.0L1126.6 550.3L1129.2 548.9L1131.8 550.7L1134.4 550.2L1137.0 550.2L1139.6 549.2L1142.2 549.3L1144.8 550.7L1147.4 548.3L1150.0 551.0L1152.6 549.9L1155.2 549.5L1157.8 549.0L1160.4 549.8L1163.0 550.1L1165.6 550.6L1168.2 550.0L1170.8 550.7L1173.4 550.8L1176.0 550.2L1178.6 550.6L1181.2 548.8L1183.8 551.4L1186.4 549.7L1189.0 551.6L1191.6 552.1L1194.2 555.0L1196.8 555.4L1199.4 557.2L1202.0 561.2L1202.0 561.5L1199.4 562.9L1196.8 563.5L1194.2 564.7L1191.6 568.1L1189.0 567.0L1186.4 569.9L1183.8 571.3L1181.2 569.1L1178.6 570.7L1176.0 569.6L1173.4 570.7L1170.8 572.0L1168.2 569.4L1165.6 572.1L1163.0 571.9L1160.4 571.8L1157.8 570.8L1155.2 570.1L1152.6 569.9L1150.0 570.3L1147.4 569.6L1144.8 569.2L1142.2 571.9L1139.6 571.5L1137.0 571.8L1134.4 571.7L1131.8 570.4L1129.2 569.0L1126.6 570.8L1124.0 569.1L1121.4 571.3L1118.8 571.7L1116.2 568.6L1113.6 568.9L1111.0 568.0L1108.4 566.4L1105.8 567.3L1103.2 563.6L1100.6 563.8L1098.0 560.1z" fill="#a4b6c6"/><path d="M1106.0 559.2L1108.4 557.3L1110.9 555.2L1113.3 556.9L1115.8 555.7L1118.2 554.4L1120.7 553.0L1123.1 553.1L1125.6 555.0L1128.0 554.9L1130.4 553.4L1132.9 554.7L1135.3 555.1L1137.8 554.3L1140.2 554.0L1142.7 553.9L1145.1 555.3L1147.6 554.1L1150.0 555.2L1152.4 555.1L1154.9 554.0L1157.3 554.3L1159.8 553.0L1162.2 554.9L1164.7 552.6L1167.1 553.3L1169.6 553.9L1172.0 555.5L1174.4 553.7L1176.9 554.4L1179.3 553.6L1181.8 553.7L1184.2 556.1L1186.7 554.3L1189.1 557.3L1191.6 556.8L1194.0 559.0L1194.0 559.9L1191.6 561.9L1189.1 563.9L1186.7 563.5L1184.2 563.9L1181.8 565.9L1179.3 566.7L1176.9 565.3L1174.4 565.1L1172.0 565.1L1169.6 565.5L1167.1 566.1L1164.7 566.4L1162.2 564.6L1159.8 565.4L1157.3 565.8L1154.9 565.7L1152.4 567.0L1150.0 566.2L1147.6 565.4L1145.1 567.1L1142.7 564.8L1140.2 565.0L1137.8 566.5L1135.3 564.8L1132.9 567.1L1130.4 566.4L1128.0 565.1L1125.6 566.9L1123.1 567.3L1120.7 564.8L1118.2 565.1L1115.8 564.3L1113.3 565.3L1110.9 563.2L1108.4 561.4L1106.0 558.8z" fill="#1b86ee"/><path d="M1085.0 577.9L1088.1 575.1L1091.2 573.5L1094.2 570.3L1097.3 572.0L1100.4 571.0L1103.5 568.9L1106.5 569.1L1109.6 567.5L1112.7 568.3L1115.8 569.8L1118.8 569.9L1121.9 569.4L1125.0 567.5L1128.0 568.1L1131.1 570.4L1134.2 568.4L1137.3 569.1L1140.3 568.1L1143.4 569.6L1146.5 570.2L1149.6 568.6L1152.7 567.9L1155.7 568.4L1158.8 567.5L1161.9 568.5L1165.0 570.0L1168.0 568.4L1171.1 569.6L1174.2 570.4L1177.2 569.7L1180.3 567.6L1183.4 568.6L1186.5 567.5L1189.5 568.0L1192.6 568.9L1195.7 572.0L1198.8 571.2L1201.8 572.9L1204.9 573.1L1208.0 578.4L1208.0 578.6L1204.9 581.5L1201.8 583.0L1198.8 582.9L1195.7 585.6L1192.6 586.0L1189.5 587.4L1186.5 584.6L1183.4 586.2L1180.3 586.9L1177.2 587.0L1174.2 584.6L1171.1 584.7L1168.0 585.9L1165.0 585.9L1161.9 585.4L1158.8 586.5L1155.7 586.3L1152.7 584.7L1149.6 585.0L1146.5 585.4L1143.4 587.4L1140.3 587.3L1137.3 586.5L1134.2 587.4L1131.1 587.1L1128.0 585.1L1125.0 587.1L1121.9 584.9L1118.8 584.9L1115.8 585.0L1112.7 587.2L1109.6 585.2L1106.5 586.2L1103.5 585.2L1100.4 584.0L1097.3 584.8L1094.2 583.2L1091.2 583.5L1088.1 582.1L1085.0 578.2z" fill="#e9a666"/><path d="M1068.0 602.1L1070.6 595.3L1073.1 591.1L1075.7 590.9L1078.2 588.9L1080.8 587.0L1083.3 587.3L1085.9 585.6L1088.4 584.4L1091.0 586.6L1093.5 586.6L1096.1 586.7L1098.6 584.0L1101.2 586.6L1103.8 584.0L1106.3 586.0L1108.9 587.1L1111.4 584.4L1114.0 585.0L1116.5 587.0L1119.1 586.0L1121.6 586.6L1124.2 583.8L1126.7 585.9L1129.3 585.8L1131.8 586.9L1134.4 584.1L1136.9 584.8L1139.5 585.4L1142.1 584.5L1144.6 586.2L1147.2 586.5L1149.7 584.9L1152.3 585.9L1154.8 585.1L1157.4 584.2L1159.9 583.9L1162.5 586.4L1165.0 587.2L1167.6 587.2L1170.1 586.1L1172.7 585.3L1175.2 586.6L1177.8 585.4L1180.4 585.2L1182.9 586.4L1185.5 585.5L1188.0 584.3L1190.6 584.1L1193.1 585.0L1195.7 586.3L1198.2 586.9L1200.8 590.7L1203.3 590.2L1205.9 592.9L1208.4 594.9L1211.0 602.1L1211.0 600.4L1208.4 605.9L1205.9 607.8L1203.3 610.9L1200.8 613.1L1198.2 613.9L1195.7 617.1L1193.1 615.6L1190.6 616.8L1188.0 614.8L1185.5 617.5L1182.9 615.7L1180.4 615.0L1177.8 617.2L1175.2 616.6L1172.7 617.7L1170.1 617.9L1167.6 617.9L1165.0 615.6L1162.5 616.1L1159.9 616.2L1157.4 618.3L1154.8 616.1L1152.3 615.8L1149.7 618.0L1147.2 614.8L1144.6 614.7L1142.1 617.8L1139.5 615.2L1136.9 615.4L1134.4 617.1L1131.8 616.6L1129.3 615.0L1126.7 615.8L1124.2 616.0L1121.6 618.2L1119.1 617.2L1116.5 616.6L1114.0 618.1L1111.4 617.1L1108.9 616.8L1106.3 615.7L1103.8 615.4L1101.2 616.3L1098.6 617.6L1096.1 615.9L1093.5 617.2L1091.0 615.7L1088.4 616.7L1085.9 617.2L1083.3 615.3L1080.8 615.3L1078.2 613.7L1075.7 611.9L1073.1 609.7L1070.6 605.8L1068.0 602.2z" fill="#9fb6cc"/><path d="M1076.0 600.4L1078.6 596.2L1081.2 593.4L1083.8 589.8L1086.4 588.1L1089.0 588.2L1091.6 589.5L1094.2 588.4L1096.8 590.2L1099.4 590.0L1102.0 591.5L1104.6 591.0L1107.2 588.5L1109.8 589.1L1112.4 588.6L1115.0 590.3L1117.6 589.9L1120.2 588.2L1122.8 590.4L1125.4 589.1L1128.0 589.6L1130.6 590.8L1133.2 588.8L1135.8 589.8L1138.4 590.6L1141.0 591.5L1143.6 589.5L1146.2 588.5L1148.8 588.1L1151.4 590.7L1154.0 591.1L1156.6 590.5L1159.2 590.0L1161.8 591.0L1164.4 589.7L1167.0 588.2L1169.6 590.3L1172.2 590.9L1174.8 589.3L1177.4 588.0L1180.0 588.6L1182.6 588.2L1185.2 588.4L1187.8 589.4L1190.4 588.2L1193.0 589.9L1195.6 590.9L1198.2 590.6L1200.8 592.8L1203.4 597.3L1206.0 599.8L1206.0 600.0L1203.4 605.1L1200.8 610.1L1198.2 610.3L1195.6 613.6L1193.0 613.6L1190.4 612.1L1187.8 613.6L1185.2 611.3L1182.6 613.2L1180.0 610.9L1177.4 612.1L1174.8 612.9L1172.2 611.5L1169.6 614.0L1167.0 613.0L1164.4 612.8L1161.8 613.9L1159.2 612.1L1156.6 612.6L1154.0 611.6L1151.4 612.5L1148.8 612.9L1146.2 612.2L1143.6 613.2L1141.0 610.9L1138.4 611.5L1135.8 613.6L1133.2 612.5L1130.6 613.0L1128.0 611.5L1125.4 612.6L1122.8 612.0L1120.2 611.2L1117.6 610.7L1115.0 611.8L1112.4 612.5L1109.8 613.4L1107.2 610.9L1104.6 611.5L1102.0 610.6L1099.4 611.9L1096.8 613.9L1094.2 611.3L1091.6 613.4L1089.0 610.8L1086.4 612.0L1083.8 610.6L1081.2 608.2L1078.6 604.8L1076.0 599.7z" fill="#1585f0"/><path d="M1212 496l-7 6l-8 9l-2 7l6 -1l6-8l4-7z" fill="#f9825a"/><path d="M1229 529l4-4l1 3l-3 3z" fill="#f9825a"/><circle cx="1281" cy="591.5" r="2.6" fill="#2020c8"/></svg>
<div class="b" style="left:827px;top:128px;width:310px;height:175px;background:#262626;"></div>
<div class="b" style="left:827px;top:128px;width:310px;height:25px;background:#1b1b1b;"></div>
<div class="b" style="left:827px;top:153px;width:310px;height:1px;background:#0e0e0e;"></div>
<div class="b" style="left:827px;top:154px;width:310px;height:1px;background:#303030;"></div>
<div class="t " style="left:953px;top:133.2px;font-size:13px;line-height:15.6px;color:#e4e4e4;">归拔器</div>
<svg class="b" style="left:1121px;top:134px;" width="12" height="12"><path d="M2 2h6l-2 2l5 5l-2 2l-5-5l-2 2z" fill="#b0b0b0"/></svg>
<div class="b" style="left:838px;top:166px;width:288px;height:102px;background:#1a1a1a;border:1px solid #222;box-sizing:border-box;border-radius:2px;"></div>
<div class="b" style="left:845px;top:201px;width:275px;height:1px;background:#2e2e2e;"></div>
<div class="t " style="left:848px;top:179.5px;font-size:12.5px;line-height:15px;color:#e6e6e6;">收缩率</div>
<div class="b" style="left:912px;top:182.2px;width:126px;height:3px;background:#3a3a3a;border-radius:1.5px;"></div>
<div class="b" style="left:912px;top:182.2px;width:7.5px;height:3px;background:#d8cc70;border-radius:1.5px;"></div>
<svg class="b" style="left:918.5px;top:177.7px;" width="6" height="11"><path d="M0.5 3.5L3 0.5L5.5 3.5V10.5H0.5z" fill="#d4d0c8" stroke="#8a8a8a" stroke-width="0.6"/></svg>
<div class="b" style="left:1040px;top:176px;width:49px;height:20px;background:#3b3b3b;border-radius:1px;"></div>
<div class="t " style="left:1044px;top:179px;font-size:12.5px;line-height:15px;color:#868686;">-91</div>
<div class="t " style="left:1093px;top:179px;font-size:12.5px;line-height:15px;color:#e8e8e8;font-weight:bold;">%</div>
<div class="t " style="left:848px;top:213px;font-size:12.5px;line-height:15px;color:#e6e6e6;">尺寸</div>
<div class="b" style="left:912px;top:218.5px;width:126px;height:3px;background:#3a3a3a;border-radius:1.5px;"></div>
<div class="b" style="left:912px;top:218.5px;width:55.5px;height:3px;background:#e8c84e;border-radius:1.5px;"></div>
<svg class="b" style="left:964.5px;top:214px;" width="6" height="11"><path d="M0.5 3.5L3 0.5L5.5 3.5V10.5H0.5z" fill="#d4d0c8" stroke="#8a8a8a" stroke-width="0.6"/></svg>
<div class="b" style="left:1040px;top:210px;width:49px;height:20px;background:#3b3b3b;border-radius:1px;"></div>
<div class="t " style="left:1044px;top:213px;font-size:12.5px;line-height:15px;color:#868686;">220</div>
<div class="t " style="left:1093px;top:213px;font-size:12.5px;line-height:15px;color:#e8e8e8;">毫米</div>
<div class="t " style="left:848px;top:239.5px;font-size:12.5px;line-height:15px;color:#e6e6e6;">渐变</div>
<div class="b" style="left:912px;top:245.2px;width:126px;height:3px;background:#3a3a3a;border-radius:1.5px;"></div>
<div class="b" style="left:912px;top:245.2px;width:85.4px;height:3px;background:#e8c84e;border-radius:1.5px;"></div>
<svg class="b" style="left:994.4px;top:240.7px;" width="6" height="11"><path d="M0.5 3.5L3 0.5L5.5 3.5V10.5H0.5z" fill="#d4d0c8" stroke="#8a8a8a" stroke-width="0.6"/></svg>
<div class="b" style="left:1040px;top:236.5px;width:49px;height:20px;background:#3b3b3b;border-radius:1px;"></div>
<div class="t " style="left:1044px;top:239.5px;font-size:12.5px;line-height:15px;color:#868686;">70.0</div>
<div class="t " style="left:1093px;top:239.5px;font-size:12.5px;line-height:15px;color:#e8e8e8;font-weight:bold;">%</div>
<div class="t " style="left:912px;top:191.8px;font-size:7px;line-height:8.4px;color:#c4c4c4;letter-spacing:0.3px;">-100</div>
<div class="t " style="left:1016px;top:191.8px;font-size:7px;line-height:8.4px;color:#c4c4c4;width:21px;text-align:right;letter-spacing:0.3px;">+100</div>
<svg class="b" style="left:841px;top:277px;" width="16" height="12"><path d="M1 6l6-5v3.5q7 0 8 7q-3-4-8-3.5v3z" fill="#7c7c7c"/></svg>
<div class="b" style="left:1610px;top:43px;width:4px;height:966px;background:#1e1e1f;"></div>
<div class="b" style="left:1614px;top:62px;width:299px;height:362px;background:#262626;"></div>
<svg class="b" style="left:1616px;top:47.5px;" width="9" height="9"><path d="M0 3h4V0.5L8.5 4.5L4 8.5V6H0z" fill="#bdbdbd"/></svg>
<div class="b" style="left:1614px;top:62px;width:227px;height:19px;background:#151515;"></div>
<div class="b" style="left:1660px;top:62px;width:45px;height:19px;background:#262626;"></div>
<div class="b" style="left:1705px;top:62px;width:1px;height:19px;background:#2a2a2a;"></div>
<div class="b" style="left:1750px;top:62px;width:1px;height:19px;background:#262626;"></div>
<div class="b" style="left:1795px;top:62px;width:1px;height:19px;background:#262626;"></div>
<div class="b" style="left:1841px;top:80px;width:71px;height:1px;background:#b4b4b4;"></div>
<div class="t " style="left:1627px;top:64.8px;font-size:12px;line-height:14.4px;color:#5a5a5a;">场景</div>
<div class="t " style="left:1672px;top:64.8px;font-size:12px;line-height:14.4px;color:#f0f0f0;">织物</div>
<div class="t " style="left:1717px;top:64.8px;font-size:12px;line-height:14.4px;color:#505050;">纽扣</div>
<div class="t " style="left:1761px;top:64.8px;font-size:12px;line-height:14.4px;color:#5a5a5a;">扣眼</div>
<div class="t " style="left:1806px;top:64.8px;font-size:12px;line-height:14.4px;color:#606060;">明线</div>
<div class="b" style="left:1727px;top:98px;width:58px;height:22px;background:#2a2a2a;border-radius:2px;"></div>
<div class="b" style="left:1852px;top:98px;width:58px;height:22px;background:#2a2a2a;border-radius:2px;"></div>
<div class="t " style="left:1736px;top:100.7px;font-size:13px;line-height:15.6px;color:#a8a8a8;font-weight:bold;">+</div>
<div class="t " style="left:1753px;top:101.8px;font-size:12px;line-height:14.4px;color:#bdbdbd;">增加</div>
<div class="b" style="left:1790px;top:99px;width:59px;height:20px;background:#2c2c2c;border:1px solid #303030;box-sizing:border-box;border-radius:2px;"></div>
<div class="t " style="left:1816px;top:101.8px;font-size:12px;line-height:14.4px;color:#484848;">复制</div>
<svg class="b" style="left:1860px;top:103px;" width="12" height="11"><path d="M1 3h2.5v4h3V3H9v7H1z" fill="#8a8a8a"/><circle cx="10" cy="2" r="1.3" fill="#6a6a6a"/></svg>
<div class="t " style="left:1879px;top:101.8px;font-size:12px;line-height:14.4px;color:#bdbdbd;">应用</div>
<div class="b" style="left:1622px;top:125px;width:284px;height:1px;background:#1a1a1a;"></div>
<div class="b" style="left:1622px;top:126px;width:284px;height:1px;background:#2e2e2e;"></div>
<svg class="b" style="left:1637px;top:145px;" width="14" height="11"><path d="M1.5 5.5L5 9L12.5 1.5" fill="none" stroke="#f2c230" stroke-width="2.4"/></svg>
<div class="b" style="left:1663px;top:132px;width:37px;height:37px;background:#ffffff;"></div>
<div class="t " style="left:1710px;top:143.3px;font-size:12px;line-height:14.4px;color:#f0c050;letter-spacing:-0.6px;">FABRIC 1</div>
<svg class="b" style="left:1882px;top:144px;" width="10" height="10"><path d="M1 1h8v8H1z" fill="#8a8a8a"/><path d="M3 1h4v3.5H3z" fill="#2a2a2a"/></svg>
<div class="b" style="left:1632px;top:172px;width:270px;height:1px;background:#1c1c1c;"></div>
<div class="b" style="left:1632px;top:173px;width:270px;height:1px;background:#2c2c2c;"></div>
<div class="b" style="left:1614px;top:424px;width:299px;height:3px;background:#1e1e1f;"></div>
<div class="b" style="left:1614px;top:427px;width:299px;height:19px;background:#1b1b1d;"></div>
<div class="t " style="left:1720px;top:429.5px;font-size:12.5px;line-height:15px;color:#a8a8a8;">Property Editor</div>
<svg class="b" style="left:1616px;top:430.5px;" width="9" height="9"><path d="M0 3h4V0.5L8.5 4.5L4 8.5V6H0z" fill="#bdbdbd"/></svg>
<svg class="b" style="left:1898px;top:428px;" width="12" height="10"><path d="M6 3H1.500V9H8V6" fill="none" stroke="#8a8a8a" stroke-width="1.3"/><path d="M5 6.5L10.5 1" stroke="#8a8a8a" stroke-width="1.3"/><path d="M7 0.5H11V4.5z" fill="#8a8a8a"/></svg>
<div class="b" style="left:1614px;top:446px;width:299px;height:562px;background:#262626;"></div>
<div class="b" style="left:1897px;top:448px;width:15px;height:560px;background:#232323;"></div>
<div class="b" style="left:1898px;top:464px;width:13px;height:385px;background:#2c2c2c;border-radius:2px;"></div>
<div class="b" style="left:1901px;top:654px;width:6px;height:1px;background:#555;"></div>
<div class="b" style="left:1901px;top:656.5px;width:6px;height:1px;background:#555;"></div>
<div class="b" style="left:1901px;top:659px;width:6px;height:1px;background:#555;"></div>
<div class="t " style="left:1643px;top:452.8px;font-size:12px;line-height:14.4px;color:#c2c2c2;">名字</div>
<div class="t " style="left:1787px;top:452.8px;font-size:12px;line-height:14.4px;color:#b4b4b4;width:79px;letter-spacing:-0.1px;overflow:hidden;">Pattern2D_35(</div>
<svg class="b" style="left:1871px;top:453px;" width="13" height="13"><path d="M1.5 11.5L3 7.5L10 0.8L12 2.8L5 9.8z" fill="#7e7e7e"/></svg>
<div class="b" style="left:1643px;top:473px;width:245px;height:1px;background:#1c1c1c;"></div>
<div class="b" style="left:1643px;top:474px;width:245px;height:1px;background:#2b2b2b;"></div>
<svg class="b" style="left:1627px;top:485px;" width="10" height="7"><path d="M0.5 0.5h9L5 6.5z" fill="#d0d0d0"/></svg>
<div class="t " style="left:1643px;top:481.3px;font-size:12px;line-height:14.4px;color:#f2c14e;">被选择的线</div>
<div class="b" style="left:1643px;top:500.5px;width:245px;height:1px;background:#1c1c1c;"></div>
<div class="b" style="left:1643px;top:501.5px;width:245px;height:1px;background:#2b2b2b;"></div>
<div class="t " style="left:1662px;top:509.1px;font-size:12px;line-height:14.4px;color:#c2c2c2;">2D线段长度</div>
<div class="t " style="left:1781px;top:509.1px;font-size:12px;line-height:14.4px;color:#b4b4b4;letter-spacing:0.35px;">2526.8mm</div>
<div class="b" style="left:1662px;top:529.5px;width:223px;height:1px;background:#1c1c1c;"></div>
<div class="b" style="left:1662px;top:530.5px;width:223px;height:1px;background:#2b2b2b;"></div>
<div class="t " style="left:1662px;top:536.8px;font-size:12px;line-height:14.4px;color:#c2c2c2;">3D线段长度</div>
<div class="t " style="left:1781px;top:536.8px;font-size:12px;line-height:14.4px;color:#b4b4b4;letter-spacing:0.35px;">5775.9mm</div>
<div class="b" style="left:1662px;top:557.5px;width:223px;height:1px;background:#1c1c1c;"></div>
<div class="b" style="left:1662px;top:558.5px;width:223px;height:1px;background:#2b2b2b;"></div>
<div class="t " style="left:1662px;top:565.3px;font-size:12px;line-height:14.4px;color:#c2c2c2;">弹性</div>
<div class="b" style="left:1780px;top:566px;width:11px;height:11px;background:#7c7c7c;border-radius:1px;"></div>
<div class="t " style="left:1798.5px;top:564.8px;font-size:12px;line-height:14.4px;color:#b4b4b4;">Off</div>
<div class="b" style="left:1662px;top:585.5px;width:218px;height:1px;background:#1c1c1c;"></div>
<div class="b" style="left:1662px;top:586.5px;width:218px;height:1px;background:#2b2b2b;"></div>
<div class="t " style="left:1662px;top:592.8px;font-size:12px;line-height:14.4px;color:#c2c2c2;">粘衬条</div>
<div class="b" style="left:1780px;top:594px;width:11px;height:11px;background:#7c7c7c;border-radius:1px;"></div>
<div class="t " style="left:1798.5px;top:592.8px;font-size:12px;line-height:14.4px;color:#b4b4b4;">Off</div>
<div class="b" style="left:1662px;top:613.5px;width:218px;height:1px;background:#1c1c1c;"></div>
<div class="b" style="left:1662px;top:614.5px;width:218px;height:1px;background:#2b2b2b;"></div>
<svg class="b" style="left:1646px;top:624.5px;" width="10" height="7"><path d="M0.5 0.5h9L5 6.5z" fill="#d0d0d0"/></svg>
<div class="t " style="left:1662px;top:621.3px;font-size:12px;line-height:14.4px;color:#c2c2c2;width:81px;overflow:hidden;">边缘弯曲率设定</div>
<div class="b" style="left:1780px;top:622px;width:11px;height:11px;background:#d8d8d8;border-radius:1px;"></div>
<svg class="b" style="left:1780px;top:621.5px;" width="12" height="12"><path d="M2 6L5 9L10 2.5" fill="none" stroke="#d8a800" stroke-width="2.2"/></svg>
<div class="t " style="left:1798.5px;top:620.8px;font-size:12px;line-height:14.4px;color:#b4b4b4;">On</div>
<div class="b" style="left:1662px;top:641.5px;width:223px;height:1px;background:#1c1c1c;"></div>
<div class="b" style="left:1662px;top:642.5px;width:223px;height:1px;background:#2b2b2b;"></div>
<div class="t " style="left:1680.5px;top:657.8px;font-size:12px;line-height:14.4px;color:#c2c2c2;letter-spacing:0.4px;">弯曲率(%</div>
<div class="t " style="left:1777px;top:647.5px;font-size:12px;line-height:14.4px;color:#b4b4b4;">100</div>
<svg class="b" style="left:1857px;top:647px;" width="14" height="14"><path d="M2 12.2L8 6.2" stroke="#8e8e8e" stroke-width="2.2" stroke-linecap="round"/><path d="M12.6 2.8a3.2 3.2 0 1 1-3.4-1.4L8.6 3.6l1.8 1.8z" fill="#8e8e8e"/></svg>
<div class="b" style="left:1774px;top:675.5px;width:97px;height:2px;background:#4a4a4a;border-radius:1px;"></div>
<div class="b" style="left:1774px;top:675.5px;width:95px;height:2px;background:#a8a8a8;border-radius:1px;"></div>
<svg class="b" style="left:1866px;top:670.5px;" width="6" height="11"><path d="M0.5 3.5L3 0.5L5.5 3.5V10.5H0.5z" fill="#d4d4d4" stroke="#777" stroke-width="0.6"/></svg>
<div class="b" style="left:1680px;top:688px;width:195px;height:1px;background:#1c1c1c;"></div>
<div class="b" style="left:1680px;top:689px;width:195px;height:1px;background:#2b2b2b;"></div>
<div class="t " style="left:1680.5px;top:695.8px;font-size:12px;line-height:14.4px;color:#c2c2c2;">双层表现</div>
<div class="b" style="left:1775px;top:697px;width:11px;height:11px;background:#7c7c7c;border-radius:1px;"></div>
<div class="t " style="left:1793.5px;top:695.8px;font-size:12px;line-height:14.4px;color:#b4b4b4;">Off</div>
<div class="b" style="left:1680px;top:716.5px;width:195px;height:1px;background:#1c1c1c;"></div>
<div class="b" style="left:1680px;top:717.5px;width:195px;height:1px;background:#2b2b2b;"></div>
<svg class="b" style="left:1627.5px;top:728px;" width="10" height="7"><path d="M0.5 0.5h9L5 6.5z" fill="#d0d0d0"/></svg>
<div class="t " style="left:1643px;top:724.3px;font-size:12px;line-height:14.4px;color:#f2c14e;">模拟属性</div>
<div class="b" style="left:1643px;top:743.5px;width:245px;height:1px;background:#1c1c1c;"></div>
<div class="b" style="left:1643px;top:744.5px;width:245px;height:1px;background:#2b2b2b;"></div>
<div class="t " style="left:1661.7px;top:752.5px;font-size:12px;line-height:14.4px;color:#c2c2c2;width:106px;overflow:hidden;">粒子间距 (毫米</div>
<div class="t " style="left:1781.5px;top:752.5px;font-size:12px;line-height:14.4px;color:#b4b4b4;">10.0</div>
<svg class="b" style="left:1864px;top:752.2px;" width="14" height="14"><path d="M2 12.2L8 6.2" stroke="#8e8e8e" stroke-width="2.2" stroke-linecap="round"/><path d="M12.6 2.8a3.2 3.2 0 1 1-3.4-1.4L8.6 3.6l1.8 1.8z" fill="#8e8e8e"/></svg>
<div class="b" style="left:1662px;top:773.2px;width:218px;height:1px;background:#1c1c1c;"></div>
<div class="b" style="left:1662px;top:774.2px;width:218px;height:1px;background:#2b2b2b;"></div>
<div class="t " style="left:1661.7px;top:779.8px;font-size:12px;line-height:14.4px;color:#c2c2c2;width:106px;overflow:hidden;">层</div>
<div class="t " style="left:1781.5px;top:779.8px;font-size:12px;line-height:14.4px;color:#b4b4b4;">0</div>
<svg class="b" style="left:1864px;top:779.5px;" width="14" height="14"><path d="M2 12.2L8 6.2" stroke="#8e8e8e" stroke-width="2.2" stroke-linecap="round"/><path d="M12.6 2.8a3.2 3.2 0 1 1-3.4-1.4L8.6 3.6l1.8 1.8z" fill="#8e8e8e"/></svg>
<div class="b" style="left:1662px;top:800.5px;width:218px;height:1px;background:#1c1c1c;"></div>
<div class="b" style="left:1662px;top:801.5px;width:218px;height:1px;background:#2b2b2b;"></div>
<div class="t " style="left:1661.7px;top:807.3px;font-size:12px;line-height:14.4px;color:#c2c2c2;width:106px;overflow:hidden;">纬向缩率 (%)</div>
<div class="t " style="left:1781.5px;top:807.3px;font-size:12px;line-height:14.4px;color:#b4b4b4;">100.00</div>
<svg class="b" style="left:1864px;top:807px;" width="14" height="14"><path d="M2 12.2L8 6.2" stroke="#8e8e8e" stroke-width="2.2" stroke-linecap="round"/><path d="M12.6 2.8a3.2 3.2 0 1 1-3.4-1.4L8.6 3.6l1.8 1.8z" fill="#8e8e8e"/></svg>
<div class="b" style="left:1662px;top:828px;width:218px;height:1px;background:#1c1c1c;"></div>
<div class="b" style="left:1662px;top:829px;width:218px;height:1px;background:#2b2b2b;"></div>
<div class="t " style="left:1661.7px;top:835.4px;font-size:12px;line-height:14.4px;color:#c2c2c2;width:106px;overflow:hidden;">经向缩率 (%)</div>
<div class="t " style="left:1781.5px;top:835.4px;font-size:12px;line-height:14.4px;color:#b4b4b4;">100.00</div>
<svg class="b" style="left:1864px;top:835.1px;" width="14" height="14"><path d="M2 12.2L8 6.2" stroke="#8e8e8e" stroke-width="2.2" stroke-linecap="round"/><path d="M12.6 2.8a3.2 3.2 0 1 1-3.4-1.4L8.6 3.6l1.8 1.8z" fill="#8e8e8e"/></svg>
<div class="b" style="left:1662px;top:856.1px;width:218px;height:1px;background:#1c1c1c;"></div>
<div class="b" style="left:1662px;top:857.1px;width:218px;height:1px;background:#2b2b2b;"></div>
<div class="t " style="left:1661.7px;top:863.1px;font-size:12px;line-height:14.4px;color:#c2c2c2;width:106px;overflow:hidden;">增加厚度 - 冲突 (毫米</div>
<div class="t " style="left:1781.5px;top:863.1px;font-size:12px;line-height:14.4px;color:#b4b4b4;">2.5</div>
<svg class="b" style="left:1864px;top:862.8px;" width="14" height="14"><path d="M2 12.2L8 6.2" stroke="#8e8e8e" stroke-width="2.2" stroke-linecap="round"/><path d="M12.6 2.8a3.2 3.2 0 1 1-3.4-1.4L8.6 3.6l1.8 1.8z" fill="#8e8e8e"/></svg>
<div class="b" style="left:1662px;top:883.8px;width:218px;height:1px;background:#1c1c1c;"></div>
<div class="b" style="left:1662px;top:884.8px;width:218px;height:1px;background:#2b2b2b;"></div>
<div class="t " style="left:1661.7px;top:891.2px;font-size:12px;line-height:14.4px;color:#c2c2c2;width:106px;overflow:hidden;">增加厚度 - 渲染 (毫米</div>
<div class="t " style="left:1781.5px;top:891.2px;font-size:12px;line-height:14.4px;color:#b4b4b4;">0.0</div>
<svg class="b" style="left:1864px;top:890.9px;" width="14" height="14"><path d="M2 12.2L8 6.2" stroke="#8e8e8e" stroke-width="2.2" stroke-linecap="round"/><path d="M12.6 2.8a3.2 3.2 0 1 1-3.4-1.4L8.6 3.6l1.8 1.8z" fill="#8e8e8e"/></svg>
<div class="b" style="left:1662px;top:911.9px;width:218px;height:1px;background:#1c1c1c;"></div>
<div class="b" style="left:1662px;top:912.9px;width:218px;height:1px;background:#2b2b2b;"></div>
<svg class="b" style="left:1649px;top:931.5px;" width="7" height="10"><path d="M0.5 0.5v9L6.5 5z" fill="#d0d0d0"/></svg>
<div class="t " style="left:1661.7px;top:929.8px;font-size:12px;line-height:14.4px;color:#c2c2c2;">压力</div>
<div class="t " style="left:1781.5px;top:918.6px;font-size:12px;line-height:14.4px;color:#b4b4b4;">0</div>
<svg class="b" style="left:1862px;top:917.5px;" width="14" height="14"><path d="M2 12.2L8 6.2" stroke="#8e8e8e" stroke-width="2.2" stroke-linecap="round"/><path d="M12.6 2.8a3.2 3.2 0 1 1-3.4-1.4L8.6 3.6l1.8 1.8z" fill="#8e8e8e"/></svg>
<div class="b" style="left:1779px;top:946.5px;width:100px;height:2px;background:#4a4a4a;border-radius:1px;"></div>
<div class="b" style="left:1779px;top:946.5px;width:50px;height:2px;background:#a8a8a8;border-radius:1px;"></div>
<svg class="b" style="left:1826px;top:941.5px;" width="6" height="11"><path d="M0.5 3.5L3 0.5L5.5 3.5V10.5H0.5z" fill="#d4d4d4" stroke="#777" stroke-width="0.6"/></svg>
<div class="b" style="left:1662px;top:959px;width:223px;height:1px;background:#1c1c1c;"></div>
<div class="b" style="left:1662px;top:960px;width:223px;height:1px;background:#2b2b2b;"></div>
<svg class="b" style="left:1627.5px;top:970.5px;" width="10" height="7"><path d="M0.5 0.5h9L5 6.5z" fill="#d0d0d0"/></svg>
<div class="t " style="left:1643px;top:966.8px;font-size:12px;line-height:14.4px;color:#f2c14e;">织物</div>
<div class="b" style="left:1643px;top:986.5px;width:245px;height:1px;background:#1c1c1c;"></div>
<div class="b" style="left:1643px;top:987.5px;width:245px;height:1px;background:#2b2b2b;"></div>
<div class="t " style="left:1661.7px;top:993.3px;font-size:12px;line-height:14.4px;color:#c2c2c2;">织物</div>
<div class="b" style="left:1785px;top:991.5px;width:20px;height:16px;background:#ffffff;"></div>
<div class="b" style="left:1807px;top:991px;width:76px;height:17px;background:#2e2e2e;"></div>
<div class="t " style="left:1812px;top:992.8px;font-size:12px;line-height:14.4px;color:#a0a0a0;letter-spacing:-0.7px;">FABRIC 1</div>
<svg class="b" style="left:1873px;top:998px;" width="7" height="5"><path d="M0.5 0.5h6L3.5 4.5z" fill="#8a8a8a"/></svg>
<div class="b" style="left:1897px;top:993px;width:14px;height:14px;background:#303030;border-radius:2px;"></div>
<div class="b" style="left:1614px;top:1008px;width:299px;height:1px;background:#1a1a1a;"></div>
<svg class="b" style="left:1780px;top:1015px;" width="20" height="16"><rect x="1" y="1" width="17" height="13" fill="none" stroke="#8c8c8c" stroke-width="1.6"/><path d="M9.5 1v13" stroke="#8c8c8c" stroke-width="1.4"/></svg>
<svg class="b" style="left:1810px;top:1015px;" width="21" height="16"><rect x="1" y="1" width="18" height="13" fill="none" stroke="#8c8c8c" stroke-width="1.6"/><text x="10" y="11" font-family="Liberation Sans, sans-serif" font-size="8.5" font-weight="bold" fill="#8c8c8c" text-anchor="middle">3D</text></svg>
<svg class="b" style="left:1841px;top:1015px;" width="21" height="16"><rect x="1" y="1" width="18" height="13" fill="none" stroke="#8c8c8c" stroke-width="1.6"/><text x="10" y="11" font-family="Liberation Sans, sans-serif" font-size="8.5" font-weight="bold" fill="#8c8c8c" text-anchor="middle">2D</text></svg>
<div class="b" style="left:1874px;top:1014px;width:1px;height:17px;background:#333;"></div>
<svg class="b" style="left:1886px;top:1016px;" width="13" height="13"><path d="M10 4.5A4.2 4.2 0 1 0 10.5 8.5" fill="none" stroke="#8c8c8c" stroke-width="1.8"/><path d="M7.5 1.5h4.5V6z" fill="#8c8c8c"/></svg>
<div class="t " style="left:1410px;top:17.4px;font-size:11px;line-height:13.2px;color:#3a3a3c;">Hello</div>
<div class="b" style="left:1444px;top:14px;width:1px;height:20px;background:#1c1c1c;"></div>
<div class="b" style="left:1466px;top:10px;width:32px;height:27px;background:#0d0d0d;border:1px solid #3a3a3a;box-sizing:border-box;border-radius:5px;"></div>
<svg class="b" style="left:1466px;top:10px;" width="32" height="27"><g fill="#f2ae1c"><circle cx="10.5" cy="15" r="5"/><circle cx="16" cy="11.5" r="6"/><circle cx="21.5" cy="15" r="4.8"/><rect x="8" y="14" width="16" height="6" rx="3"/></g><path d="M18.6 9.6a3 3 0 1 0 0 4" fill="none" stroke="#3a1c00" stroke-width="2"/></svg>
<svg class="b" style="left:1516px;top:16px;" width="26" height="22"><path d="M2 6h4l8-5v18l-8-5H2z" fill="#c8c8c8"/><path d="M17.5 4.5q5 5.5 0 11" fill="none" stroke="#c8c8c8" stroke-width="2"/></svg>
<svg class="b" style="left:1560px;top:15px;" width="22" height="24"><circle cx="11" cy="6.5" r="4.8" fill="#cfcfcf"/><path d="M3 22q0-10 8-10t8 10z" fill="#c4c4c4"/></svg>
<svg class="b" style="left:1611px;top:15px;" width="24" height="24"><circle cx="12" cy="12" r="10.2" fill="#c8c8c8"/><text x="12" y="17.5" font-family="Liberation Sans, sans-serif" font-size="16" font-weight="bold" fill="#2a2a2a" text-anchor="middle">?</text></svg>
<svg class="b" style="left:1652px;top:14px;" width="26" height="24"><path d="M8.500 8l-6 3l2.3 4.200l2.400-1.100v8h9.600v-8l2.400 1.100l2.300-4.200l-6-3l-3.500 1.800z" fill="#c0c0c0"/><path d="M19 6h5M21.500 3.500v5" stroke="#d8d8d8" stroke-width="1.500"/></svg>
<div class="b" style="left:1683px;top:8px;width:137px;height:33px;background:#212123;"></div>
<div class="b" style="left:1683px;top:12px;width:1px;height:26px;background:#1c1c1c;"></div>
<svg class="b" style="left:1692px;top:16px;" width="16" height="16"><g fill="none" stroke-width="2.6"><path d="M2 2l6 5l6-5" stroke="#f6c432"/><path d="M2 8l6 5l6-5" stroke="#e8a020"/></g></svg>
<div class="t " style="left:1715.5px;top:17.2px;font-size:10.5px;line-height:12.6px;color:#f4f4f4;font-weight:bold;letter-spacing:-0.15px;">SIMULATION</div>
<div class="b" style="left:1797px;top:10px;width:1px;height:28px;background:#1a1a1a;"></div>
<div class="b" style="left:1798px;top:10px;width:1px;height:28px;background:#303030;"></div>
<svg class="b" style="left:1804px;top:20px;" width="10" height="7"><path d="M0.5 0.5h8L4.500 5.500z" fill="#d8d8d8"/></svg>
<div class="b" style="left:1882px;top:17px;width:18px;height:18px;background:#1c1c1d;border-radius:2px;"></div>
<div class="b" style="left:1841px;top:25px;width:7px;height:2px;background:#6a6a6a;"></div>
<svg class="b" style="left:1861px;top:20px;" width="14" height="12"><rect x="4" y="1" width="8" height="6" fill="none" stroke="#6a6a6a" stroke-width="1.3"/><rect x="1" y="4.500" width="8" height="6" fill="#262628" stroke="#6a6a6a" stroke-width="1.3"/></svg>
<svg class="b" style="left:1884px;top:20px;" width="12" height="12"><path d="M2 2l7 7M9 2l-7 7" stroke="#4a4a4a" stroke-width="1.8"/></svg>
</body></html>
